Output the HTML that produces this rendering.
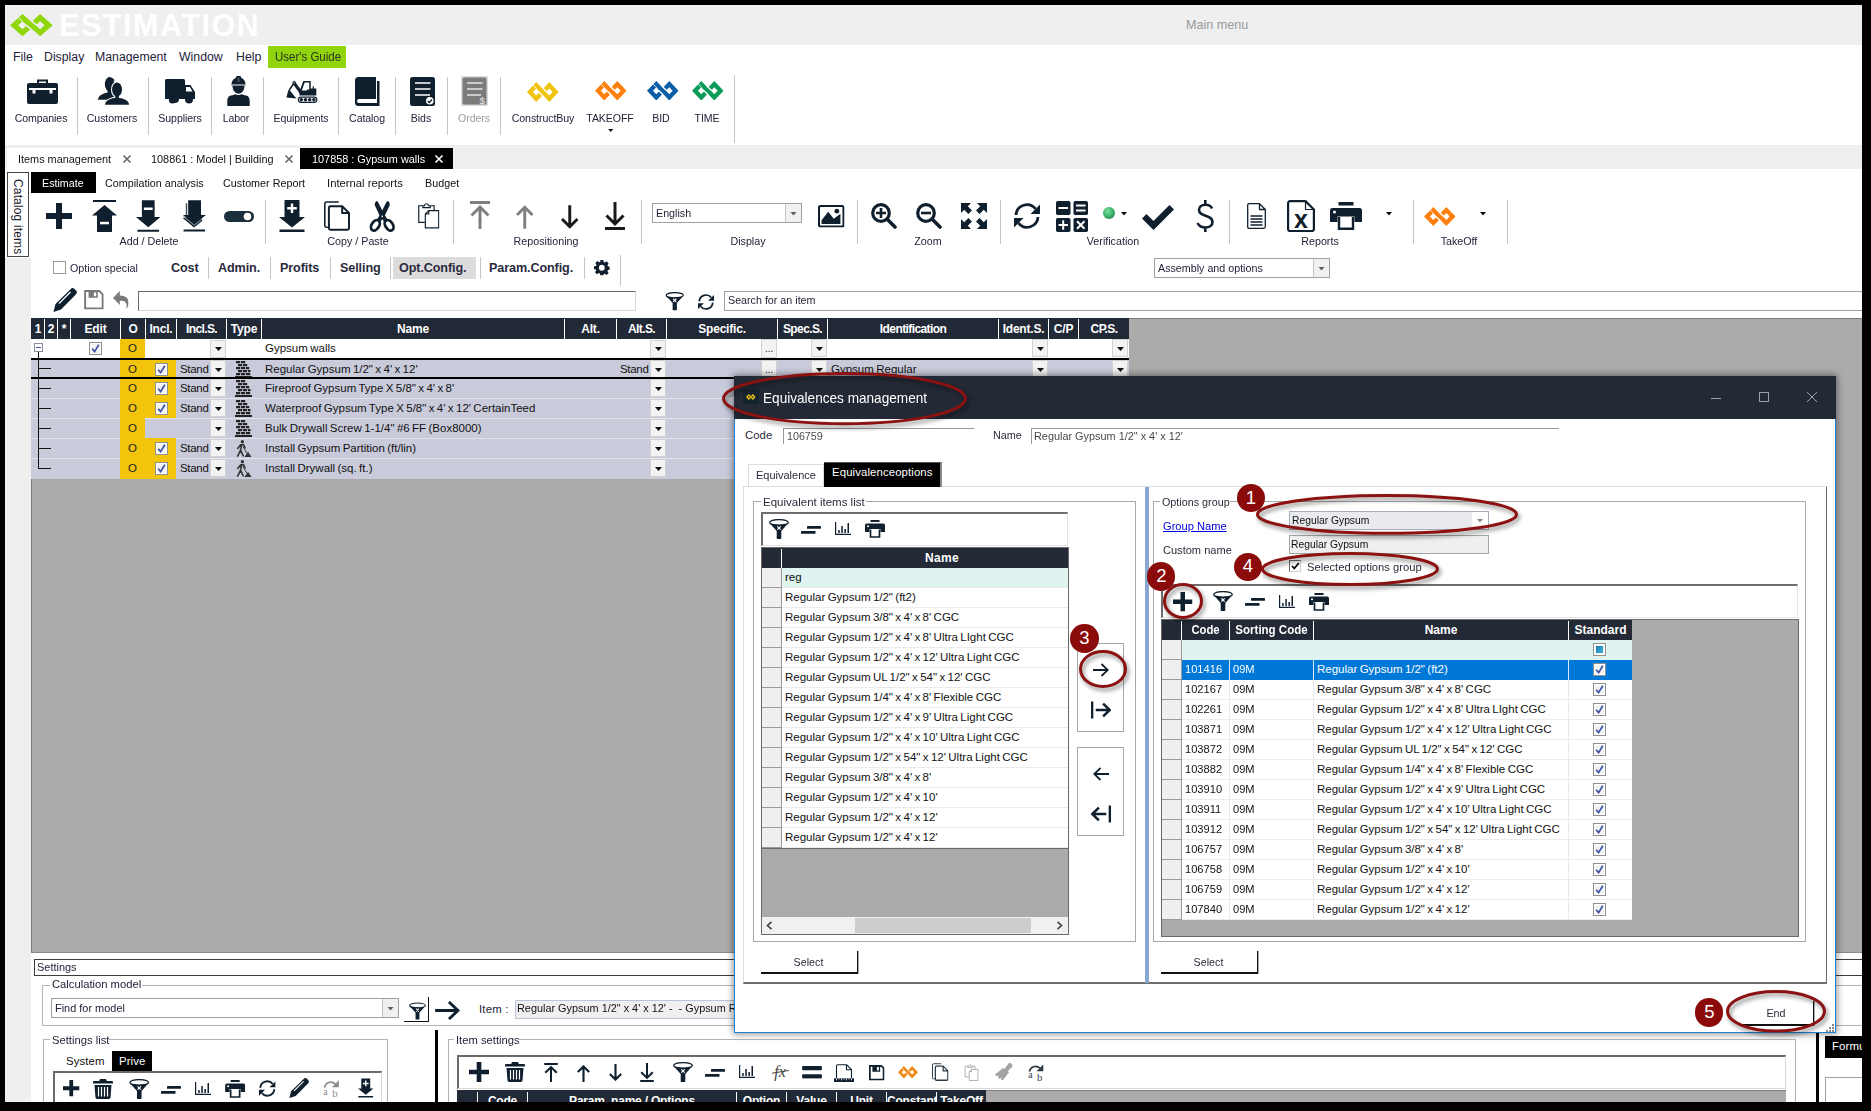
<!DOCTYPE html>
<html><head><meta charset="utf-8"><title>Estimation</title>
<style>
*{box-sizing:border-box;margin:0;padding:0}
html,body{width:1871px;height:1111px;overflow:hidden;background:#000}
body{font-family:"Liberation Sans",sans-serif;font-size:11px;color:#1f2430;position:relative}
.a{position:absolute}
.t{position:absolute;white-space:nowrap;line-height:1}
svg{position:absolute;overflow:visible}
#app{position:absolute;left:5px;top:5px;width:1857px;height:1097px;background:#fff;overflow:hidden}
#w{position:absolute;left:-5px;top:-5px;width:1871px;height:1111px}

</style></head><body>
<svg width="0" height="0" style="position:absolute"><defs>

<symbol id="logo" viewBox="0 0 42.7 22.3" preserveAspectRatio="none">
 <mask id="lgm" maskUnits="userSpaceOnUse" x="0" y="0" width="42.7" height="22.3"><rect width="42.7" height="22.3" fill="#fff"/>
  <path d="M8 3.250L12.900 7.650" stroke="#000" stroke-width="1"/>
  <path d="M21.400 6.950L26.600 11.100M21.300 15.350L16.100 11.200" stroke="#000" stroke-width="1.700"/></mask>
 <g mask="url(#lgm)" fill="currentColor" fill-rule="evenodd">
 <path d="M12.550 0L25.100 11.150L12.550 22.300L0 11.150ZM12.550 7.150L17.050 11.150L12.550 15.150L8.050 11.150Z"/>
 <path d="M30.150 0L42.700 11.150L30.150 22.300L17.600 11.150ZM30.150 7.150L34.650 11.150L30.150 15.150L25.650 11.150Z"/></g>
</symbol>
<symbol id="briefcase" viewBox="0 0 31 25">
 <path fill="currentColor" d="M2 4h27a2 2 0 0 1 2 2v17a2 2 0 0 1-2 2H2a2 2 0 0 1-2-2V6a2 2 0 0 1 2-2z"/>
 <path fill="none" stroke="currentColor" stroke-width="2" d="M11 4V1.5h9V4"/>
 <path fill="#fff" d="M2 9h27v2h-3.5v3.5h-3V11h-14v3.5h-3V11H2z"/>
</symbol>
<symbol id="customers" viewBox="0 0 31.1 28">
 <g fill="currentColor"><ellipse cx="11.6" cy="7.2" rx="4.700" ry="7.200"/><path d="M14 .6l3 2.600l-3.500 1z"/><path d="M0 22.800a11.600 7.300 0 0 1 11.600-7.300h5v7.300z"/><path d="M9.500 12h4.500v5H9.500z"/></g>
 <g fill="currentColor" stroke="#fff" stroke-width="2.200" paint-order="stroke"><ellipse cx="19.100" cy="12.500" rx="5" ry="7.100"/><path d="M7.100 27.900a12 7.100 0 0 1 24 0z"/></g>
 <path fill="currentColor" d="M17.300 18h3.600v4h-3.600z"/>
</symbol>
<symbol id="truck" viewBox="0 0 30 25">
 <path fill="currentColor" d="M1.500 0h17a1.500 1.500 0 0 1 1.500 1.500V6h5.500l4.500 7v7h-2a4 4 0 0 1-8 0h-6a4 4 0 0 1-8 0H0V1.500A1.500 1.500 0 0 1 1.500 0z"/>
 <path fill="#fff" d="M21 8h4l2.500 4.500H21z"/>
 <circle cx="7.500" cy="21" r="3.600" fill="currentColor"/><circle cx="24" cy="21" r="3.600" fill="currentColor"/>
</symbol>
<symbol id="worker" viewBox="0 0 23 30">
 <path fill="currentColor" d="M10 0h3a1 1 0 0 1 1 1v.8c2.800 1 4.300 3.400 4.500 6.200H4.500c.2-2.800 1.700-5.200 4.500-6.200V1a1 1 0 0 1 1-1z"/>
 <path fill="#4a5862" d="M10.600 1.500h1.800v4.500h-1.800z"/>
 <path fill="#848d95" d="M4.300 8h14.400v1.700H4.300z"/>
 <path fill="currentColor" d="M5.500 9.700h12c0 4.300-2.500 8-6 8s-6-3.700-6-8z"/>
 <path fill="currentColor" d="M4 19.500c2-.5 4-1 4.500-1.500c1 1.300 5 1.300 6 0c.5.500 2.500 1 4.500 1.500c3 .8 3.700 3 3.700 6.500v4H.3v-4c0-3.500.7-5.700 3.700-6.500z"/>
</symbol>
<symbol id="excavator" viewBox="0 0 32 22">
 <path fill="currentColor" d="M2.300 9.300L.4 16.400L10.400 17.600L4.300 10z"/>
 <path stroke="currentColor" stroke-width="1.600" d="M3 9.600L8.100 1.800"/>
 <path stroke="currentColor" stroke-width="3.200" d="M8.100 1.800L15.800 12.800"/>
 <circle cx="8.100" cy="1.800" r="1.700" fill="currentColor"/><circle cx="8.100" cy="1.800" r=".6" fill="#fff"/>
 <path fill="currentColor" d="M17.300 0h7.400v7.500h2V5.300h1.200v2.200h2.400v7H13.500V10.200l3.800-10.200z"/>
 <path fill="#fff" d="M18.700 1.500h4.500v7h-1.800l-.8 1h-4.800z"/>
 <rect x="11.800" y="15.600" width="19.600" height="6.300" rx="3.150" fill="currentColor"/>
 <rect x="12.900" y="16.700" width="17.400" height="4.100" rx="2.050" fill="#fff"/>
 <g fill="currentColor"><circle cx="15.300" cy="18.750" r="1.750"/><circle cx="19.500" cy="18.750" r="1.750"/><circle cx="23.700" cy="18.750" r="1.750"/><circle cx="27.900" cy="18.750" r="1.750"/></g>
</symbol>
<symbol id="book" viewBox="0 0 25 29">
 <path fill="currentColor" d="M3.500 0H21v22H4a1.500 1.500 0 0 0 0 4h18V4h2.500v25H3.500A3.500 3.500 0 0 1 0 25.500V3.500A3.500 3.500 0 0 1 3.500 0z"/>
</symbol>
<symbol id="bids" viewBox="0 0 25 29">
 <rect width="25" height="29" rx="2.500" fill="currentColor"/>
 <path stroke="#fff" stroke-width="1.600" d="M5 6h15.500M5 12h15.500M5 18h15"/>
 <circle cx="19.800" cy="23.800" r="3.800" fill="#fff"/>
 <path fill="none" stroke="currentColor" stroke-width="1.300" d="M17.800 24l1.500 1.500l2.700-3"/>
</symbol>
<symbol id="orders" viewBox="0 0 27 30">
 <rect width="27" height="30" fill="#d9d9d9"/>
 <rect x="1.500" y="1.500" width="24" height="27" rx="1.500" fill="#7b7b7b"/>
 <path stroke="#e6e6e6" stroke-width="1.300" d="M6 7h15.500M6 13h15.500M6 19h14"/>
 <text x="21.200" y="27.500" font-size="9.500" fill="#e6e6e6" text-anchor="middle" font-family="Liberation Sans">$</text>
</symbol>
<symbol id="tri" viewBox="0 0 7 4"><path fill="currentColor" d="M0 0h7L3.500 4z"/></symbol>
<symbol id="plus" viewBox="0 0 26 26"><path fill="currentColor" d="M10 0h6v10h10v6H16v10h-6V16H0v-6h10z"/></symbol>
<symbol id="updel" viewBox="0 0 25 32">
 <path fill="currentColor" d="M1 0h23v2H1zM12.500 5L25 15.500h-5V32H5V15.500H0z"/>
 <path fill="#fff" d="M8 21.800h9v2.500H8z"/>
</symbol>
<symbol id="downminus" viewBox="0 0 25 32">
 <path fill="currentColor" d="M6 0h13v17h6L12.500 27.500L0 17h6zM1.500 30h22v2h-22z"/>
 <path fill="#fff" d="M8 7.300h9v2.500H8z"/>
</symbol>
<symbol id="downmulti" viewBox="0 0 25 32">
 <path fill="currentColor" d="M.7 18L12.300 27.800L20.800 20.800L19 16z"/>
 <path fill="none" stroke="#a6aeb4" stroke-width="1" d="M1.200 16.200L12.500 25.400L20.500 19"/>
 <path fill="currentColor" d="M6.300 0h13.100v15.100h5L12.500 24.400L1 15.100h5.300z"/>
 <path fill="#3c4c58" d="M3.900 3.100h1.400v11.800H3.900z"/>
 <path fill="currentColor" d="M1.600 29.900h21.900v2H1.600z"/>
</symbol>
<symbol id="toggle" viewBox="0 0 30 11">
 <rect width="30" height="11" rx="5.500" fill="#1c2f3d"/><circle cx="23.500" cy="5.500" r="3.800" fill="#fff"/>
</symbol>
<symbol id="downplus" viewBox="0 0 26 32">
 <path fill="currentColor" d="M5.500 0h15v17H26L13 27.500L0 17h5.500zM.5 29.500h25V32H.5z"/>
 <path fill="#fff" d="M11.800 3.500h2.400v3.600h3.600v2.400h-3.600v3.600h-2.400V9.500H8.200V7.100h3.600z"/>
</symbol>
<symbol id="copy" viewBox="0 0 27 30">
 <path fill="none" stroke="currentColor" stroke-width="1.600" d="M4 26.500H2.500A1.700 1.700 0 0 1 .8 24.800V2.500A1.700 1.700 0 0 1 2.500 .8H15"/>
 <path fill="none" stroke="currentColor" stroke-width="2" stroke-linejoin="round" d="M6.500 5h12l7 7v15.500a1.500 1.500 0 0 1-1.500 1.500H6.500A1.500 1.500 0 0 1 5 27.500v-21A1.500 1.500 0 0 1 6.500 5zM18.500 5v7h7"/>
</symbol>
<symbol id="scissors" viewBox="0 0 26.5 31">
 <path fill="currentColor" d="M7.300 0Q5.200 2 5.800 4.200L11.300 16L16 21.500L18.500 18.500L15.200 13.300L8.900.8Z"/>
 <path fill="currentColor" d="M19.200 0Q21.300 2 20.700 4.200L15.200 16L10.500 21.500L8 18.500L11.300 13.300L17.600.8Z"/>
 <ellipse cx="6.400" cy="24.300" rx="3.700" ry="5.700" transform="rotate(33 6.400 24.300)" fill="none" stroke="currentColor" stroke-width="2.800"/>
 <ellipse cx="20.100" cy="24.300" rx="3.700" ry="5.700" transform="rotate(-33 20.100 24.300)" fill="none" stroke="currentColor" stroke-width="2.800"/>
 <circle cx="13.250" cy="15.300" r=".9" fill="#dfe3e6"/>
</symbol>
<symbol id="paste" viewBox="0 0 22 27">
 <path fill="none" stroke="currentColor" stroke-width="1.200" d="M7 20.500H.8V3.500H5M12.500 3.500h4V8M5 5.500h7.500V3.500h-1.800a2 2 0 0 0-4 0H5z"/>
 <path fill="none" stroke="currentColor" stroke-width="1.200" d="M11 8.500h10.200v17.700H7.500V12zM7.500 12H11V8.500"/>
</symbol>
<symbol id="arrtop" viewBox="0 0 20 28">
 <path fill="currentColor" d="M0 0h20v3H0z"/>
 <path fill="none" stroke="currentColor" stroke-width="3" d="M10 28V6.500M1.500 14.500L10 6L18.500 14.500"/>
</symbol>
<symbol id="arrup" viewBox="0 0 18 24">
 <path fill="none" stroke="currentColor" stroke-width="3" d="M9 24V2.500M1 10L9 2L17 10"/>
</symbol>
<symbol id="arrdown" viewBox="0 0 18 24">
 <path fill="none" stroke="currentColor" stroke-width="3" d="M9 0v21.500M1 14L9 22L17 14"/>
</symbol>
<symbol id="arrbot" viewBox="0 0 20 28">
 <path fill="currentColor" d="M0 25h20v3H0z"/>
 <path fill="none" stroke="currentColor" stroke-width="3" d="M10 0v21.500M1.500 13.500L10 22L18.500 13.500"/>
</symbol>
<symbol id="image" viewBox="0 0 26 22">
 <rect x="1" y="1" width="24" height="20" rx="1.500" fill="none" stroke="currentColor" stroke-width="2"/>
 <path fill="currentColor" d="M3.500 18.500v-3.500L10 6.500l5.500 7l6.500-5v10z"/><circle cx="18.500" cy="6" r="2.300" fill="currentColor"/>
</symbol>
<symbol id="zoomin" viewBox="0 0 26 26">
 <circle cx="10" cy="10" r="8.300" fill="none" stroke="currentColor" stroke-width="3.200"/>
 <path stroke="currentColor" stroke-width="3.600" stroke-linecap="round" d="M16.500 16.500L24 24"/>
 <path fill="currentColor" d="M8.700 5h2.600v3.700H15v2.600h-3.700V15H8.700v-3.700H5V8.700h3.700z"/>
</symbol>
<symbol id="zoomout" viewBox="0 0 26 26">
 <circle cx="10" cy="10" r="8.300" fill="none" stroke="currentColor" stroke-width="3.200"/>
 <path stroke="currentColor" stroke-width="3.600" stroke-linecap="round" d="M16.500 16.500L24 24"/>
 <path fill="currentColor" d="M5 8.700h10v2.600H5z"/>
</symbol>
<symbol id="expand" viewBox="0 0 26 26">
 <path fill="currentColor" d="M0 0h10L6.800 3.200L11 7.400L7.400 11L3.200 6.800L0 10zM26 0v10l-3.200-3.200L18.600 11L15 7.400l4.200-4.200L16 0zM0 26V16l3.200 3.200L7.400 15l3.600 3.600l-4.200 4.200L10 26zM26 26H16l3.200-3.200L15 18.600l3.600-3.600l4.200 4.200L26 16z"/>
</symbol>
<symbol id="refresh" viewBox="0 0 26 26">
 <path fill="none" stroke="currentColor" stroke-width="2.800" d="M2 12A11 11 0 0 1 21.500 5.800M24 14A11 11 0 0 1 4.500 20.200"/>
 <path fill="currentColor" d="M26 1.500v9.500h-9.500zM0 24.500V15h9.500z"/>
</symbol>
<symbol id="calc" viewBox="0 0 32 31">
 <g fill="currentColor"><rect width="14.500" height="14" rx="1.800"/><rect x="17.500" width="14.500" height="14" rx="1.800"/><rect y="17" width="14.500" height="14" rx="1.800"/><rect x="17.500" y="17" width="14.500" height="14" rx="1.800"/></g>
 <path stroke="#fff" stroke-width="2" fill="none" d="M2.500 7h9.500M20 4.500h9.500M20 9.500h9.500M2.500 24h9.500M7.200 19.200v9.600M21 20.200l7.500 7.600M28.500 20.200l-7.500 7.600"/>
</symbol>
<symbol id="check" viewBox="0 0 32 25"><path fill="currentColor" d="M0 13.500l4.500-4.500l7 7L27.500 0L32 4.500L11.500 25z"/></symbol>
<symbol id="dollar" viewBox="0 0 18 32">
 <path fill="none" stroke="currentColor" stroke-width="2.600" d="M16 8.500C15 6 12.500 4.800 9.500 4.800C5.500 4.800 3 7 3 10c0 7 13.500 4.500 13.500 12c0 3.500-3 5.500-7 5.500c-4 0-6.500-1.500-8-4.500M9.300 0v5M9.300 27v5"/>
</symbol>
<symbol id="doc" viewBox="0 0 19 26">
 <path fill="none" stroke="currentColor" stroke-width="1.300" stroke-linejoin="round" d="M2 .7h10.500l5.800 5.800v17.300a1.500 1.500 0 0 1-1.500 1.500H2A1.300 1.300 0 0 1 .7 24V2A1.300 1.300 0 0 1 2 .7zM12.500.7v5.800h5.800"/>
 <path stroke="currentColor" stroke-width="1.300" d="M3.500 13h12M3.500 16h12M3.500 19h12M3.500 22h12"/>
</symbol>
<symbol id="excel" viewBox="0 0 28 32">
 <path fill="none" stroke="currentColor" stroke-width="2.200" stroke-linejoin="round" d="M3 1.100h15.500l8.400 8.400V29a2 2 0 0 1-2 2H3A1.900 1.900 0 0 1 1.100 29V3A1.900 1.900 0 0 1 3 1.100z"/>
 <path fill="none" stroke="currentColor" stroke-width="1.200" d="M18.500 1.100v8.400h8.400"/>
 <text x="14" y="28" font-size="25" font-weight="bold" fill="currentColor" text-anchor="middle" font-family="Liberation Sans">x</text>
</symbol>
<symbol id="print" viewBox="0 0 32 28">
 <path fill="currentColor" d="M8.500 0h15v3.500h-15zM2.500 6h27A2.500 2.500 0 0 1 32 8.500V20h-7.500v-5.500h-17V20H0V8.500A2.500 2.500 0 0 1 2.500 6z"/>
 <path fill="none" stroke="currentColor" stroke-width="2.400" d="M9 15v11.800h14V15"/>
 <circle cx="4.500" cy="10" r="1.500" fill="#fff"/>
</symbol>


<symbol id="gear" viewBox="0 0 16 16">
 <path fill="currentColor" fill-rule="evenodd" d="M6.500 0h3l.4 2.100l1.200.5l1.800-1.200l2.100 2.100l-1.200 1.800l.5 1.200l2.100.4v3l-2.100.4l-.5 1.200l1.200 1.800l-2.100 2.100l-1.800-1.200l-1.200.5L9.500 16h-3l-.4-2.100l-1.200-.5l-1.800 1.200l-2.100-2.100l1.200-1.800l-.5-1.200L0 9.500v-3l2.100-.4l.5-1.200L1.400 3.100l2.100-2.100l1.800 1.200l1.200-.5zM8 5a3 3 0 1 0 0 6a3 3 0 0 0 0-6z"/>
</symbol>
<symbol id="pencil" viewBox="0 0 24 24">
 <path fill="currentColor" d="M17.500 1.200a3 3 0 0 1 4.300 0l1 1a3 3 0 0 1 0 4.300L8 21.500L.500 24L2.500 16z"/>
 <path stroke="#fff" stroke-width="1.300" d="M6 15.500L17.500 4"/>
</symbol>
<symbol id="save" viewBox="0 0 20 20">
 <path fill="none" stroke="currentColor" stroke-width="2" d="M1 1h14.500L19 4.500V19H1z"/>
 <path fill="currentColor" d="M4.500 1h9.500v7H4.500z"/><path fill="#fff" d="M10 2.500h2.300v4H10z"/>
</symbol>
<symbol id="undo" viewBox="0 0 16 19">
 <path fill="currentColor" d="M7 0v4.500c6 0 9 3 9 7.500c0 3-1 5-2.500 7c.5-2 .8-3.500.3-5.500C13 10.500 10.500 10 7 10v4.500L0 7.200z"/>
</symbol>
<symbol id="filter" viewBox="0 0 20 20">
 <ellipse cx="10" cy="3.400" rx="9.300" ry="2.800" fill="none" stroke="currentColor" stroke-width="1.300"/>
 <path fill="currentColor" d="M.8 4.200C4 6.500 16 6.500 19.200 4.200L12.300 12v7.300a.7.700 0 0 1-.7.700H8.400a.7.700 0 0 1-.7-.7V12z"/>
 <path stroke="#fff" stroke-width="1.200" d="M8.300 7.300l3.400 3.400M11.700 7.300l-3.400 3.400"/>
</symbol>
<symbol id="lines" viewBox="0 0 20 8">
 <rect x="6" y="0" width="14" height="2.800" rx=".6" fill="currentColor"/><rect x="0" y="5" width="14.500" height="2.800" rx=".6" fill="currentColor"/>
</symbol>
<symbol id="chart" viewBox="0 0 16 13">
 <path fill="none" stroke="currentColor" stroke-width="1.200" d="M.6 0v12.400H16"/>
 <path fill="currentColor" d="M3.200 8h1.500v3H3.200zM6.300 4h1.500v7H6.300zM9.400 7h1.500v4H9.400zM12.500 1h1.500v10h-1.500z"/>
</symbol>
<symbol id="printsm" viewBox="0 0 20 18">
 <path fill="currentColor" d="M5.500 0h9v2h-9zM1.800 3.500h16.400A1.800 1.800 0 0 1 20 5.300V12h-4.500V9h-11v3H0V5.300A1.800 1.800 0 0 1 1.800 3.500z"/>
 <path fill="none" stroke="currentColor" stroke-width="1.700" d="M5.500 9.500V17h9V9.500"/>
 <circle cx="3" cy="6.300" r="1" fill="#fff"/>
</symbol>
<symbol id="trash" viewBox="0 0 20 20">
 <path fill="currentColor" d="M7 0h6l.8 2H19a1 1 0 0 1 1 1v1.500H0V3a1 1 0 0 1 1-1h5.200zM1.500 6h17l-1 12.500a1.600 1.600 0 0 1-1.600 1.500H4.100a1.600 1.600 0 0 1-1.600-1.500z"/>
 <path stroke="#fff" stroke-width="1.200" d="M5.500 8v9.500M8.500 8v9.500M11.500 8v9.500M14.500 8v9.500"/>
</symbol>
<symbol id="ab" viewBox="0 0 18 18">
 <path fill="none" stroke="currentColor" stroke-width="1.700" d="M2.500 8.500C3.500 3.500 9 1.500 13.500 5"/>
 <path fill="currentColor" d="M16.800 1.200v7h-7z"/>
 <text x="3.500" y="15.500" font-size="10" fill="currentColor" text-anchor="middle" font-family="Liberation Serif">a</text>
 <text x="13" y="17.800" font-size="11" fill="currentColor" text-anchor="middle" font-family="Liberation Serif">b</text>
</symbol>
<symbol id="fx" viewBox="0 0 17 18">
 <text x="8" y="13.500" font-size="16" font-style="italic" fill="currentColor" text-anchor="middle" font-family="Liberation Serif">fx</text>
 <path stroke="currentColor" stroke-width="1" d="M0 10.200L17 7.500"/>
</symbol>
<symbol id="equal" viewBox="0 0 20 13"><rect width="20" height="4.300" rx=".8" fill="currentColor"/><rect y="8.500" width="20" height="4.300" rx=".8" fill="currentColor"/></symbol>
<symbol id="docruler" viewBox="0 0 20 18">
 <path fill="none" stroke="currentColor" stroke-width="1.100" stroke-linejoin="round" d="M2.500 14V2A1.300 1.300 0 0 1 3.800 .7h8.700l5 5V14M12.500.7v5h5"/>
 <path fill="currentColor" d="M0 14.300h20V18H0z"/><path stroke="#fff" stroke-width=".8" d="M2.500 14.300v2M5 14.300v1.300M7.500 14.300v2M10 14.300v1.300M12.500 14.300v2M15 14.300v1.300M17.500 14.300v2"/>
</symbol>
<symbol id="floppy" viewBox="0 0 16 16">
 <path fill="none" stroke="currentColor" stroke-width="1.800" d="M.9.900h11.800l2.400 2.400v11.800H.9z"/>
 <path fill="currentColor" d="M3.500.9h8v6h-8z"/><path fill="#fff" d="M8.200 2h2v3.700h-2z"/>
</symbol>
<symbol id="copysm" viewBox="0 0 17 18">
 <path fill="none" stroke="currentColor" stroke-width="1" d="M3 16H1.500A1 1 0 0 1 .5 15V1.500A1 1 0 0 1 1.500 .5H9.500"/>
 <path fill="none" stroke="currentColor" stroke-width="1.300" stroke-linejoin="round" d="M4.500 3h7l4.800 4.800v8.700a1 1 0 0 1-1 1H4.500a1 1 0 0 1-1-1V4a1 1 0 0 1 1-1zM11.500 3v4.800h4.800"/>
</symbol>
<symbol id="brush" viewBox="0 0 18 18">
 <path fill="currentColor" d="M13.500.5a1.600 1.600 0 0 1 2.500 0l1.200 1.500a1.500 1.500 0 0 1-.2 2L13 8l1 1.500l-6.500 8l-1.500-1l.5-2l-2 1.200L3 14.500l.8-2.300l-2.300 1L0 11.500L8 5l1.500 1z"/>
</symbol>
<symbol id="ar" viewBox="0 0 16 14"><path fill="none" stroke="currentColor" stroke-width="1.800" d="M0 7h14.500M8.500 1L14.800 7L8.500 13"/></symbol>
<symbol id="arbar" viewBox="0 0 19 16"><path fill="none" stroke="currentColor" stroke-width="2.400" d="M1 0v16M4.500 8h13M11.500 2L17.800 8L11.500 14"/></symbol>
<symbol id="al" viewBox="0 0 16 14"><path fill="none" stroke="currentColor" stroke-width="1.800" d="M16 7H1.500M7.500 1L1.200 7L7.500 13"/></symbol>
<symbol id="albar" viewBox="0 0 19 16"><path fill="none" stroke="currentColor" stroke-width="2.400" d="M18 0v16M14.500 8h-13M7.500 2L1.200 8L7.500 14"/></symbol>
<symbol id="bigarrow" viewBox="0 0 26 20"><path fill="none" stroke="currentColor" stroke-width="3" d="M0 10h23.500M14.500 1L24 10L14.500 19"/></symbol>
<symbol id="brick" viewBox="0 0 17 17">
 <path fill="#222" d="M1 0h4.200v2.300H1zM6 0h4.200v2.300H6zM3 3h4.200v2.300H3zM8 3h4.200v2.300H8zM1 6h4.200v2.300H1zM6 6h4.200v2.300H6zM11 6h3.200v2.300H11zM3 9h4.200v2.300H3zM8 9h4.200v2.300H8zM13 9h2.500v2.300H13zM1 12h4.200v2.300H1zM6 12h4.200v2.300H6zM11 12h4.200v2.300H11zM0 15h17v2H0z"/>
</symbol>
<symbol id="digger" viewBox="0 0 17 18">
 <circle cx="7.300" cy="1.800" r="1.800" fill="#333"/>
 <path fill="none" stroke="#333" stroke-width="1.700" stroke-linejoin="round" d="M2 9.500L5.500 5H8.500L10.500 9M6.500 5.500L5.300 11L2 17.500M5.500 11L8.500 17.500"/>
 <path stroke="#333" stroke-width="1" d="M8 7L12 14"/>
 <path fill="#333" d="M9.500 18L13.300 12.500L17 18z"/>
</symbol>

</defs></svg>
<div id="app"><div id="w">
<!-- part1 -->
<div class="a" style="left:5px;top:5px;width:1857px;height:40px;background:#efefef;"></div>
<svg style="left:9.8px;top:13.9px;color:#8fd60b;" width="42.7" height="22.3"><use href="#logo"/></svg>
<div class="t" style="left:59px;top:10px;font-size:30.5px;color:#fff;font-weight:bold;letter-spacing:1.55px;transform:scaleY(1.0);">ESTIMATION</div>
<div class="t" style="left:1186px;top:19px;font-size:12.6px;color:#9a9a9a;">Main menu</div>
<div class="a" style="left:5px;top:45px;width:1857px;height:25px;background:#fff;"></div>
<div class="t" style="left:13px;top:51px;font-size:12.3px;color:#23233a;">File</div>
<div class="t" style="left:44px;top:51px;font-size:12.3px;color:#23233a;">Display</div>
<div class="t" style="left:95px;top:51px;font-size:12.3px;color:#23233a;">Management</div>
<div class="t" style="left:179px;top:51px;font-size:12.3px;color:#23233a;">Window</div>
<div class="t" style="left:236px;top:51px;font-size:12.3px;color:#23233a;">Help</div>
<div class="a" style="left:268px;top:46px;width:78px;height:22px;background:#8fd40c;"></div>
<div class="t" style="left:274.5px;top:51px;font-size:12.3px;color:#2a3320;transform:scaleX(0.935);transform-origin:left top;">User's Guide</div>
<div class="a" style="left:5px;top:70px;width:1857px;height:75px;background:#fff;"></div>
<div class="a" style="left:77px;top:77px;width:1px;height:58px;background:#c6c6c6;"></div>
<div class="a" style="left:148px;top:77px;width:1px;height:58px;background:#c6c6c6;"></div>
<div class="a" style="left:211px;top:77px;width:1px;height:58px;background:#c6c6c6;"></div>
<div class="a" style="left:263px;top:77px;width:1px;height:58px;background:#c6c6c6;"></div>
<div class="a" style="left:338px;top:77px;width:1px;height:58px;background:#c6c6c6;"></div>
<div class="a" style="left:395px;top:77px;width:1px;height:58px;background:#c6c6c6;"></div>
<div class="a" style="left:447px;top:77px;width:1px;height:58px;background:#c6c6c6;"></div>
<div class="a" style="left:500px;top:77px;width:1px;height:58px;background:#c6c6c6;"></div>
<div class="a" style="left:734px;top:75px;width:1px;height:68px;background:#c6c6c6;"></div>
<svg style="left:27px;top:79px;color:#0f1f2d;" width="31" height="25"><use href="#briefcase"/></svg>
<svg style="left:98px;top:77px;color:#0f1f2d;" width="31" height="28"><use href="#customers"/></svg>
<svg style="left:165px;top:79px;color:#0f1f2d;" width="30" height="25"><use href="#truck"/></svg>
<svg style="left:226.5px;top:76px;color:#0f1f2d;" width="23" height="30"><use href="#worker"/></svg>
<svg style="left:285.5px;top:81px;color:#0f1f2d;" width="32" height="22"><use href="#excavator"/></svg>
<svg style="left:354.5px;top:77px;color:#0f1f2d;" width="25" height="29"><use href="#book"/></svg>
<svg style="left:410px;top:77px;color:#0f1f2d;" width="25" height="29"><use href="#bids"/></svg>
<svg style="left:461px;top:76px;" width="27" height="30"><use href="#orders"/></svg>
<svg style="left:527px;top:82px;color:#f0c30f;" width="31.6" height="20"><use href="#logo"/></svg>
<svg style="left:595px;top:81.3px;color:#ff7f0e;" width="31.6" height="19.4"><use href="#logo"/></svg>
<svg style="left:647px;top:81.3px;color:#0b5ea6;" width="31.6" height="19.4"><use href="#logo"/></svg>
<svg style="left:692px;top:81.3px;color:#0a9b58;" width="31.6" height="19.4"><use href="#logo"/></svg>
<div class="t" style="left:-109px;top:113px;font-size:11.4px;color:#23233a;letter-spacing:-0.1px;width:300px;text-align:center;transform:scaleX(0.93);transform-origin:center top;">Companies</div>
<div class="t" style="left:-38px;top:113px;font-size:11.4px;color:#23233a;letter-spacing:-0.1px;width:300px;text-align:center;transform:scaleX(0.93);transform-origin:center top;">Customers</div>
<div class="t" style="left:30px;top:113px;font-size:11.4px;color:#23233a;letter-spacing:-0.1px;width:300px;text-align:center;transform:scaleX(0.93);transform-origin:center top;">Suppliers</div>
<div class="t" style="left:86px;top:113px;font-size:11.4px;color:#23233a;letter-spacing:-0.1px;width:300px;text-align:center;transform:scaleX(0.93);transform-origin:center top;">Labor</div>
<div class="t" style="left:151px;top:113px;font-size:11.4px;color:#23233a;letter-spacing:-0.1px;width:300px;text-align:center;transform:scaleX(0.93);transform-origin:center top;">Equipments</div>
<div class="t" style="left:217px;top:113px;font-size:11.4px;color:#23233a;letter-spacing:-0.1px;width:300px;text-align:center;transform:scaleX(0.93);transform-origin:center top;">Catalog</div>
<div class="t" style="left:271px;top:113px;font-size:11.4px;color:#23233a;letter-spacing:-0.1px;width:300px;text-align:center;transform:scaleX(0.93);transform-origin:center top;">Bids</div>
<div class="t" style="left:393px;top:113px;font-size:11.4px;color:#23233a;letter-spacing:-0.1px;width:300px;text-align:center;transform:scaleX(0.93);transform-origin:center top;">ConstructBuy</div>
<div class="t" style="left:460px;top:113px;font-size:11.4px;color:#23233a;letter-spacing:-0.1px;width:300px;text-align:center;transform:scaleX(0.93);transform-origin:center top;">TAKEOFF</div>
<div class="t" style="left:511px;top:113px;font-size:11.4px;color:#23233a;letter-spacing:-0.1px;width:300px;text-align:center;transform:scaleX(0.93);transform-origin:center top;">BID</div>
<div class="t" style="left:557px;top:113px;font-size:11.4px;color:#23233a;letter-spacing:-0.1px;width:300px;text-align:center;transform:scaleX(0.93);transform-origin:center top;">TIME</div>
<div class="t" style="left:324px;top:113px;font-size:11.4px;color:#9a9aa4;letter-spacing:-0.1px;width:300px;text-align:center;transform:scaleX(0.93);transform-origin:center top;">Orders</div>
<svg style="left:607.5px;top:128.8px;color:#111;" width="5.5" height="3"><use href="#tri"/></svg>
<div class="a" style="left:5px;top:145px;width:1857px;height:24px;background:#efefef;"></div>
<div class="a" style="left:7px;top:148px;width:293px;height:21px;background:#fff;"></div>
<div class="t" style="left:17.5px;top:154px;font-size:11.4px;color:#111;transform:scaleX(0.955);transform-origin:left top;">Items management</div>
<div class="t" style="left:151px;top:154px;font-size:11.4px;color:#111;transform:scaleX(0.955);transform-origin:left top;">108861 : Model | Building</div>
<div class="a" style="left:300px;top:148px;width:153px;height:21px;background:#000;"></div>
<div class="t" style="left:312px;top:154px;font-size:11.4px;color:#fff;transform:scaleX(0.955);transform-origin:left top;">107858 : Gypsum walls</div>
<svg style="left:123px;top:155px" width="8" height="8"><path d="M0.500 .5L7.500 7.500M7.500 .5L.5 7.500" stroke="#666" stroke-width="1.600"/></svg>
<svg style="left:284.5px;top:155px" width="8" height="8"><path d="M0.500 .5L7.500 7.500M7.500 .5L.5 7.500" stroke="#666" stroke-width="1.600"/></svg>
<svg style="left:435px;top:155px" width="8" height="8"><path d="M0.500 .5L7.500 7.500M7.500 .5L.5 7.500" stroke="#fff" stroke-width="1.600"/></svg>
<div class="a" style="left:5px;top:258px;width:26px;height:844px;background:#efefef;"></div>
<div class="a" style="left:7px;top:172px;width:22px;height:85px;background:#fff;border:1px solid #444;"></div>
<div class="t" style="left:18px;top:0px;font-size:12px;color:#1a1a2a;letter-spacing:0.15px;top:179px;transform-origin:0 0;transform:translate(6px,0) rotate(90deg);">Catalog items</div>
<!-- part2 -->
<div class="a" style="left:31px;top:172px;width:65px;height:21px;background:#000;"></div>
<div class="t" style="left:42px;top:178px;font-size:11.4px;color:#fff;transform:scaleX(0.94);transform-origin:left top;">Estimate</div>
<div class="t" style="left:105px;top:178px;font-size:11.4px;color:#111;transform:scaleX(0.945);transform-origin:left top;">Compilation analysis</div>
<div class="t" style="left:223px;top:178px;font-size:11.4px;color:#111;transform:scaleX(0.945);transform-origin:left top;">Customer Report</div>
<div class="t" style="left:327px;top:178px;font-size:11.4px;color:#111;transform:scaleX(0.99);transform-origin:left top;">Internal reports</div>
<div class="t" style="left:425px;top:178px;font-size:11.4px;color:#111;transform:scaleX(0.945);transform-origin:left top;">Budget</div>
<div class="a" style="left:265px;top:200px;width:1px;height:44px;background:#c6c6c6;"></div>
<div class="a" style="left:453px;top:200px;width:1px;height:44px;background:#c6c6c6;"></div>
<div class="a" style="left:641px;top:200px;width:1px;height:44px;background:#c6c6c6;"></div>
<div class="a" style="left:857px;top:200px;width:1px;height:44px;background:#c6c6c6;"></div>
<div class="a" style="left:1000px;top:200px;width:1px;height:44px;background:#c6c6c6;"></div>
<div class="a" style="left:1229px;top:200px;width:1px;height:44px;background:#c6c6c6;"></div>
<div class="a" style="left:1413px;top:200px;width:1px;height:44px;background:#c6c6c6;"></div>
<div class="a" style="left:1507px;top:200px;width:1px;height:44px;background:#c6c6c6;"></div>
<svg style="left:46px;top:203px;color:#0f1f2d;" width="26" height="26"><use href="#plus"/></svg>
<svg style="left:92px;top:200px;color:#0f1f2d;" width="25" height="32"><use href="#updel"/></svg>
<svg style="left:136px;top:200px;color:#0f1f2d;" width="24.5" height="32"><use href="#downminus"/></svg>
<svg style="left:181.5px;top:200px;color:#0f1f2d;" width="24.5" height="32"><use href="#downmulti"/></svg>
<svg style="left:224px;top:211px;" width="30" height="11"><use href="#toggle"/></svg>
<svg style="left:279px;top:200px;color:#0f1f2d;" width="26" height="32"><use href="#downplus"/></svg>
<svg style="left:323.5px;top:201.3px;color:#0f1f2d;" width="26.5" height="30"><use href="#copy"/></svg>
<svg style="left:368.8px;top:201px;color:#0f1f2d;" width="26.5" height="31"><use href="#scissors"/></svg>
<svg style="left:417.5px;top:202px;color:#0f1f2d;" width="21.5" height="27"><use href="#paste"/></svg>
<svg style="left:470px;top:201px;color:#7f7f7f;" width="20" height="28"><use href="#arrtop"/></svg>
<svg style="left:516px;top:205px;color:#7f7f7f;" width="17.5" height="24"><use href="#arrup"/></svg>
<svg style="left:561px;top:205px;color:#1a1a1a;" width="17.5" height="24"><use href="#arrdown"/></svg>
<svg style="left:605px;top:202.3px;color:#1a1a1a;" width="20" height="28"><use href="#arrbot"/></svg>
<div class="a" style="left:652px;top:203px;width:150px;height:20px;background:#fff;border:1px solid #a0a0a0;"></div><div class="a" style="left:785px;top:204px;width:16px;height:18px;background:#f0f0f0;border-left:1px solid #c4c4c4;"></div><svg style="left:790px;top:211.5px;color:#606060;" width="7" height="3.5"><use href="#tri"/></svg><div class="t" style="left:656px;top:207.5px;font-size:11.4px;color:#23233a;transform:scaleX(0.94);transform-origin:left top;">English</div>
<svg style="left:817.5px;top:204.5px;color:#0f1f2d;" width="26.5" height="22.5"><use href="#image"/></svg>
<svg style="left:871px;top:203px;color:#0f1f2d;" width="26" height="26"><use href="#zoomin"/></svg>
<svg style="left:916px;top:203px;color:#0f1f2d;" width="26" height="26"><use href="#zoomout"/></svg>
<svg style="left:961px;top:203px;color:#0f1f2d;" width="26" height="26"><use href="#expand"/></svg>
<svg style="left:1014px;top:203px;color:#0f1f2d;" width="26" height="26"><use href="#refresh"/></svg>
<svg style="left:1056px;top:201px;color:#0f1f2d;" width="32" height="31"><use href="#calc"/></svg>
<svg style="left:1103px;top:207px" width="12" height="12"><defs><radialGradient id="gd" cx=".4" cy=".35" r=".7"><stop offset="0" stop-color="#7fe0a0"/><stop offset=".6" stop-color="#3cb568"/><stop offset="1" stop-color="#2a8a4c"/></radialGradient></defs><circle cx="6" cy="6" r="6" fill="url(#gd)"/></svg>
<svg style="left:1120.5px;top:212px;color:#111;" width="6" height="3.5"><use href="#tri"/></svg>
<svg style="left:1142px;top:204.5px;color:#0f1f2d;" width="32" height="25"><use href="#check"/></svg>
<svg style="left:1196px;top:200px;color:#0f1f2d;" width="18" height="32"><use href="#dollar"/></svg>
<svg style="left:1247.3px;top:203.3px;color:#0f1f2d;" width="19" height="26"><use href="#doc"/></svg>
<svg style="left:1287px;top:200px;color:#0f1f2d;" width="28" height="32"><use href="#excel"/></svg>
<svg style="left:1330px;top:202px;color:#0f1f2d;" width="32" height="28"><use href="#print"/></svg>
<svg style="left:1385.5px;top:212px;color:#111;" width="6" height="3.5"><use href="#tri"/></svg>
<svg style="left:1424px;top:206.5px;color:#ff7f0e;" width="31.6" height="19"><use href="#logo"/></svg>
<svg style="left:1479.5px;top:212px;color:#111;" width="6" height="3.5"><use href="#tri"/></svg>
<div class="t" style="left:-1.5px;top:235.5px;font-size:11.4px;color:#23233a;width:300px;text-align:center;transform:scaleX(0.94);transform-origin:center top;">Add / Delete</div>
<div class="t" style="left:208px;top:235.5px;font-size:11.4px;color:#23233a;width:300px;text-align:center;transform:scaleX(0.94);transform-origin:center top;">Copy / Paste</div>
<div class="t" style="left:396px;top:235.5px;font-size:11.4px;color:#23233a;width:300px;text-align:center;transform:scaleX(0.94);transform-origin:center top;">Repositioning</div>
<div class="t" style="left:598px;top:235.5px;font-size:11.4px;color:#23233a;width:300px;text-align:center;transform:scaleX(0.94);transform-origin:center top;">Display</div>
<div class="t" style="left:778px;top:235.5px;font-size:11.4px;color:#23233a;width:300px;text-align:center;transform:scaleX(0.94);transform-origin:center top;">Zoom</div>
<div class="t" style="left:963px;top:235.5px;font-size:11.4px;color:#23233a;width:300px;text-align:center;transform:scaleX(0.94);transform-origin:center top;">Verification</div>
<div class="t" style="left:1170px;top:235.5px;font-size:11.4px;color:#23233a;width:300px;text-align:center;transform:scaleX(0.94);transform-origin:center top;">Reports</div>
<div class="t" style="left:1309px;top:235.5px;font-size:11.4px;color:#23233a;width:300px;text-align:center;transform:scaleX(0.94);transform-origin:center top;">TakeOff</div>
<div class="a" style="left:53px;top:261px;width:13px;height:13px;background:#fff;border:1px solid #9a9a9a;"></div>
<div class="t" style="left:70px;top:262.5px;font-size:11.4px;color:#23233a;transform:scaleX(0.94);transform-origin:left top;">Option special</div>
<div class="a" style="left:208px;top:257px;width:1px;height:22px;background:#c6c6c6;"></div>
<div class="a" style="left:270px;top:257px;width:1px;height:22px;background:#c6c6c6;"></div>
<div class="a" style="left:330px;top:257px;width:1px;height:22px;background:#c6c6c6;"></div>
<div class="a" style="left:390px;top:257px;width:1px;height:22px;background:#c6c6c6;"></div>
<div class="a" style="left:480px;top:257px;width:1px;height:22px;background:#c6c6c6;"></div>
<div class="a" style="left:584px;top:257px;width:1px;height:22px;background:#c6c6c6;"></div>
<div class="a" style="left:620px;top:255px;width:1px;height:31px;background:#c6c6c6;"></div>
<div class="a" style="left:393px;top:257px;width:83px;height:22px;background:#dcdcdc;"></div>
<div class="t" style="left:171px;top:261.5px;font-size:12.6px;color:#2a2a3e;font-weight:bold;letter-spacing:-0.1px;">Cost</div>
<div class="t" style="left:218px;top:261.5px;font-size:12.6px;color:#2a2a3e;font-weight:bold;letter-spacing:-0.1px;">Admin.</div>
<div class="t" style="left:280px;top:261.5px;font-size:12.6px;color:#2a2a3e;font-weight:bold;letter-spacing:-0.1px;">Profits</div>
<div class="t" style="left:340px;top:261.5px;font-size:12.6px;color:#2a2a3e;font-weight:bold;letter-spacing:-0.1px;">Selling</div>
<div class="t" style="left:399px;top:261.5px;font-size:12.6px;color:#2a2a3e;font-weight:bold;letter-spacing:-0.1px;">Opt.Config.</div>
<div class="t" style="left:489px;top:261.5px;font-size:12.6px;color:#2a2a3e;font-weight:bold;letter-spacing:-0.1px;">Param.Config.</div>
<svg style="left:594.4px;top:260px;color:#0f1f2d;" width="15.6" height="15.6"><use href="#gear"/></svg>
<div class="a" style="left:1154px;top:258px;width:176px;height:20px;background:#fff;border:1px solid #a0a0a0;"></div><div class="a" style="left:1313px;top:259px;width:16px;height:18px;background:#f0f0f0;border-left:1px solid #c4c4c4;"></div><svg style="left:1318px;top:266.5px;color:#606060;" width="7" height="3.5"><use href="#tri"/></svg><div class="t" style="left:1158px;top:262.5px;font-size:11.4px;color:#23233a;transform:scaleX(0.94);transform-origin:left top;">Assembly and options</div>
<svg style="left:53px;top:288px;color:#0f1f2d;" width="24" height="24"><use href="#pencil"/></svg>
<svg style="left:84px;top:290px;color:#7a7a7a;" width="19.8" height="19.5"><use href="#save"/></svg>
<svg style="left:113px;top:290.5px;color:#7a7a7a;" width="15.6" height="18.5"><use href="#undo"/></svg>
<div class="a" style="left:138px;top:291px;width:498px;height:20px;background:#fff;border:1px solid #d8d8d8;border-top:1px solid #6a6a6a;border-left:1px solid #6a6a6a;"></div>
<svg style="left:664.5px;top:292px;color:#0f1f2d;" width="19.5" height="18.5"><use href="#filter"/></svg>
<svg style="left:698px;top:293.5px;color:#0f1f2d;" width="16" height="16"><use href="#refresh"/></svg>
<div class="a" style="left:724px;top:291px;width:1145px;height:20px;background:#fff;border:1px solid #a0a0a0;"></div>
<div class="t" style="left:728px;top:295px;font-size:11.4px;color:#23233a;transform:scaleX(0.94);transform-origin:left top;">Search for an item</div>
<!-- part3 -->
<div class="a" style="left:31px;top:318px;width:1831px;height:635px;background:#ababab;border-left:1px solid #7c7c7c;border-top:1px solid #7c7c7c;border-bottom:1px solid #8a8a8a;"></div>
<div class="a" style="left:31px;top:318px;width:1098px;height:21px;background:#212836;"></div>
<div class="t" style="left:32px;top:323px;font-size:12px;color:#fff;font-weight:bold;letter-spacing:-0.2px;width:12px;text-align:center;">1</div>
<div class="a" style="left:44px;top:319px;width:1px;height:20px;background:#fff;"></div>
<div class="t" style="left:45px;top:323px;font-size:12px;color:#fff;font-weight:bold;letter-spacing:-0.2px;width:12px;text-align:center;">2</div>
<div class="a" style="left:57px;top:319px;width:1px;height:20px;background:#fff;"></div>
<div class="t" style="left:58px;top:323px;font-size:12px;color:#fff;font-weight:bold;letter-spacing:-0.2px;width:12px;text-align:center;">*</div>
<div class="a" style="left:70px;top:319px;width:1px;height:20px;background:#fff;"></div>
<div class="t" style="left:71px;top:323px;font-size:12px;color:#fff;font-weight:bold;letter-spacing:-0.2px;width:49px;text-align:center;">Edit</div>
<div class="a" style="left:120px;top:319px;width:1px;height:20px;background:#fff;"></div>
<div class="t" style="left:121px;top:323px;font-size:12px;color:#fff;font-weight:bold;letter-spacing:-0.2px;width:24px;text-align:center;">O</div>
<div class="a" style="left:145px;top:319px;width:1px;height:20px;background:#fff;"></div>
<div class="t" style="left:146px;top:323px;font-size:12px;color:#fff;font-weight:bold;letter-spacing:-0.2px;width:30px;text-align:center;">Incl.</div>
<div class="a" style="left:176px;top:319px;width:1px;height:20px;background:#fff;"></div>
<div class="t" style="left:177px;top:323px;font-size:12px;color:#fff;font-weight:bold;letter-spacing:-0.6px;width:49px;text-align:center;">Incl.S.</div>
<div class="a" style="left:226px;top:319px;width:1px;height:20px;background:#fff;"></div>
<div class="t" style="left:227px;top:323px;font-size:12px;color:#fff;font-weight:bold;letter-spacing:-0.2px;width:34px;text-align:center;">Type</div>
<div class="a" style="left:261px;top:319px;width:1px;height:20px;background:#fff;"></div>
<div class="t" style="left:262px;top:323px;font-size:12px;color:#fff;font-weight:bold;letter-spacing:-0.2px;width:302px;text-align:center;">Name</div>
<div class="a" style="left:564px;top:319px;width:1px;height:20px;background:#fff;"></div>
<div class="t" style="left:565px;top:323px;font-size:12px;color:#fff;font-weight:bold;letter-spacing:-0.2px;width:51px;text-align:center;">Alt.</div>
<div class="a" style="left:616px;top:319px;width:1px;height:20px;background:#fff;"></div>
<div class="t" style="left:617px;top:323px;font-size:12px;color:#fff;font-weight:bold;letter-spacing:-0.6px;width:49px;text-align:center;">Alt.S.</div>
<div class="a" style="left:666px;top:319px;width:1px;height:20px;background:#fff;"></div>
<div class="t" style="left:667px;top:323px;font-size:12px;color:#fff;font-weight:bold;letter-spacing:-0.2px;width:110px;text-align:center;">Specific.</div>
<div class="a" style="left:777px;top:319px;width:1px;height:20px;background:#fff;"></div>
<div class="t" style="left:778px;top:323px;font-size:12px;color:#fff;font-weight:bold;letter-spacing:-0.6px;width:49px;text-align:center;">Spec.S.</div>
<div class="a" style="left:827px;top:319px;width:1px;height:20px;background:#fff;"></div>
<div class="t" style="left:828px;top:323px;font-size:12px;color:#fff;font-weight:bold;letter-spacing:-0.6px;width:170px;text-align:center;">Identification</div>
<div class="a" style="left:998px;top:319px;width:1px;height:20px;background:#fff;"></div>
<div class="t" style="left:999px;top:323px;font-size:12px;color:#fff;font-weight:bold;letter-spacing:-0.2px;width:49px;text-align:center;">Ident.S.</div>
<div class="a" style="left:1048px;top:319px;width:1px;height:20px;background:#fff;"></div>
<div class="t" style="left:1049px;top:323px;font-size:12px;color:#fff;font-weight:bold;letter-spacing:-0.2px;width:29px;text-align:center;">C/P</div>
<div class="a" style="left:1078px;top:319px;width:1px;height:20px;background:#fff;"></div>
<div class="t" style="left:1079px;top:323px;font-size:12px;color:#fff;font-weight:bold;letter-spacing:-0.6px;width:50px;text-align:center;">CP.S.</div>
<div class="a" style="left:31px;top:339px;width:1098px;height:20px;background:#fff;"></div>
<div class="a" style="left:120px;top:339px;width:25px;height:20px;background:#f2c40c;"></div>
<div class="t" style="left:120px;top:342.5px;font-size:11.5px;color:#222;width:25px;text-align:center;">O</div>
<div class="a" style="left:210px;top:339.5px;width:16px;height:18px;background:#f3f3f3;border:1px solid #d2d2d2;"></div><svg style="left:214.5px;top:347.0px;color:#111;" width="7" height="4"><use href="#tri"/></svg>
<div class="t" style="left:265px;top:342.5px;font-size:11.5px;color:#111;word-spacing:-0.8px;">Gypsum walls</div>
<div class="a" style="left:650px;top:339.5px;width:16px;height:18px;background:#f3f3f3;border:1px solid #d2d2d2;"></div><svg style="left:654.5px;top:347.0px;color:#111;" width="7" height="4"><use href="#tri"/></svg>
<div class="a" style="left:761px;top:339px;width:16px;height:19px;background:#f3f3f3;border:1px solid #d2d2d2;"></div>
<div class="t" style="left:765px;top:344px;font-size:10px;color:#111;">...</div>
<div class="a" style="left:811px;top:339px;width:16px;height:18px;background:#f3f3f3;border:1px solid #d2d2d2;"></div><svg style="left:815.5px;top:346.5px;color:#111;" width="7" height="4"><use href="#tri"/></svg>
<div class="a" style="left:1032px;top:339px;width:16px;height:18px;background:#f3f3f3;border:1px solid #d2d2d2;"></div><svg style="left:1036.5px;top:346.5px;color:#111;" width="7" height="4"><use href="#tri"/></svg>
<div class="a" style="left:1112px;top:339px;width:16px;height:18px;background:#f3f3f3;border:1px solid #d2d2d2;"></div><svg style="left:1116.5px;top:346.5px;color:#111;" width="7" height="4"><use href="#tri"/></svg>
<div class="a" style="left:31px;top:358px;width:1098px;height:20px;background:#c9cbdb;"></div>
<div class="a" style="left:120px;top:358px;width:56px;height:20px;background:#f2c40c;"></div>
<div class="t" style="left:120px;top:364px;font-size:11.5px;color:#222;width:25px;text-align:center;">O</div>
<div class="a" style="left:154.5px;top:362.5px;width:13px;height:13px;background:#f3f3f3;border:1px solid #8e8f8f;box-shadow:inset 0 0 0 1px #fff;"></div><svg style="left:156.5px;top:364.5px" width="9" height="9"><path d="M1.200 4.800L3.600 7.600L7.800 .8" fill="none" stroke="#3b50a6" stroke-width="1.700"/></svg>
<div class="t" style="left:180px;top:364px;font-size:11.5px;color:#111;letter-spacing:-0.3px;">Stand</div>
<div class="a" style="left:210px;top:360px;width:16px;height:18px;background:#f3f3f3;border:1px solid #d2d2d2;"></div><svg style="left:214.5px;top:367.5px;color:#111;" width="7" height="4"><use href="#tri"/></svg>
<svg style="left:234.5px;top:361px;" width="17" height="17"><use href="#brick"/></svg>
<div class="t" style="left:265px;top:364px;font-size:11.5px;color:#111;word-spacing:-0.8px;">Regular Gypsum 1/2" x 4' x 12'</div>
<div class="a" style="left:650px;top:360px;width:16px;height:18px;background:#f3f3f3;border:1px solid #d2d2d2;"></div><svg style="left:654.5px;top:367.5px;color:#111;" width="7" height="4"><use href="#tri"/></svg>
<div class="a" style="left:761px;top:360px;width:16px;height:19px;background:#f3f3f3;border:1px solid #d2d2d2;"></div>
<div class="t" style="left:765px;top:365px;font-size:10px;color:#111;">...</div>
<div class="a" style="left:811px;top:360px;width:16px;height:18px;background:#f3f3f3;border:1px solid #d2d2d2;"></div><svg style="left:815.5px;top:367.5px;color:#111;" width="7" height="4"><use href="#tri"/></svg>
<div class="a" style="left:1032px;top:360px;width:16px;height:18px;background:#f3f3f3;border:1px solid #d2d2d2;"></div><svg style="left:1036.5px;top:367.5px;color:#111;" width="7" height="4"><use href="#tri"/></svg>
<div class="a" style="left:1112px;top:360px;width:16px;height:18px;background:#f3f3f3;border:1px solid #d2d2d2;"></div><svg style="left:1116.5px;top:367.5px;color:#111;" width="7" height="4"><use href="#tri"/></svg>
<div class="a" style="left:31px;top:378px;width:1098px;height:20px;background:#c9cbdb;border-top:1px solid #e1e2ea;"></div>
<div class="a" style="left:120px;top:378px;width:56px;height:20px;background:#f2c40c;"></div>
<div class="t" style="left:120px;top:383px;font-size:11.5px;color:#222;width:25px;text-align:center;">O</div>
<div class="a" style="left:154.5px;top:381.5px;width:13px;height:13px;background:#f3f3f3;border:1px solid #8e8f8f;box-shadow:inset 0 0 0 1px #fff;"></div><svg style="left:156.5px;top:383.5px" width="9" height="9"><path d="M1.200 4.800L3.600 7.600L7.800 .8" fill="none" stroke="#3b50a6" stroke-width="1.700"/></svg>
<div class="t" style="left:180px;top:383px;font-size:11.5px;color:#111;letter-spacing:-0.3px;">Stand</div>
<div class="a" style="left:210px;top:379px;width:16px;height:18px;background:#f3f3f3;border:1px solid #d2d2d2;"></div><svg style="left:214.5px;top:386.5px;color:#111;" width="7" height="4"><use href="#tri"/></svg>
<svg style="left:234.5px;top:379.5px;" width="17" height="17"><use href="#brick"/></svg>
<div class="t" style="left:265px;top:383px;font-size:11.5px;color:#111;word-spacing:-0.8px;">Fireproof Gypsum Type X 5/8" x 4' x 8'</div>
<div class="a" style="left:650px;top:379px;width:16px;height:18px;background:#f3f3f3;border:1px solid #d2d2d2;"></div><svg style="left:654.5px;top:386.5px;color:#111;" width="7" height="4"><use href="#tri"/></svg>
<div class="a" style="left:31px;top:398px;width:1098px;height:20px;background:#c9cbdb;border-top:1px solid #e1e2ea;"></div>
<div class="a" style="left:120px;top:398px;width:56px;height:20px;background:#f2c40c;"></div>
<div class="t" style="left:120px;top:403px;font-size:11.5px;color:#222;width:25px;text-align:center;">O</div>
<div class="a" style="left:154.5px;top:401.5px;width:13px;height:13px;background:#f3f3f3;border:1px solid #8e8f8f;box-shadow:inset 0 0 0 1px #fff;"></div><svg style="left:156.5px;top:403.5px" width="9" height="9"><path d="M1.200 4.800L3.600 7.600L7.800 .8" fill="none" stroke="#3b50a6" stroke-width="1.700"/></svg>
<div class="t" style="left:180px;top:403px;font-size:11.5px;color:#111;letter-spacing:-0.3px;">Stand</div>
<div class="a" style="left:210px;top:399px;width:16px;height:18px;background:#f3f3f3;border:1px solid #d2d2d2;"></div><svg style="left:214.5px;top:406.5px;color:#111;" width="7" height="4"><use href="#tri"/></svg>
<svg style="left:234.5px;top:399.5px;" width="17" height="17"><use href="#brick"/></svg>
<div class="t" style="left:265px;top:403px;font-size:11.5px;color:#111;word-spacing:-0.8px;">Waterproof Gypsum Type X 5/8" x 4' x 12' CertainTeed</div>
<div class="a" style="left:650px;top:399px;width:16px;height:18px;background:#f3f3f3;border:1px solid #d2d2d2;"></div><svg style="left:654.5px;top:406.5px;color:#111;" width="7" height="4"><use href="#tri"/></svg>
<div class="a" style="left:31px;top:418px;width:1098px;height:20px;background:#c9cbdb;border-top:1px solid #e1e2ea;"></div>
<div class="a" style="left:120px;top:418px;width:25px;height:20px;background:#f2c40c;"></div>
<div class="t" style="left:120px;top:423px;font-size:11.5px;color:#222;width:25px;text-align:center;">O</div>
<div class="a" style="left:210px;top:419px;width:16px;height:18px;background:#f3f3f3;border:1px solid #d2d2d2;"></div><svg style="left:214.5px;top:426.5px;color:#111;" width="7" height="4"><use href="#tri"/></svg>
<svg style="left:234.5px;top:419.5px;" width="17" height="17"><use href="#brick"/></svg>
<div class="t" style="left:265px;top:423px;font-size:11.5px;color:#111;word-spacing:-0.8px;">Bulk Drywall Screw 1-1/4" #6 FF (Box8000)</div>
<div class="a" style="left:650px;top:419px;width:16px;height:18px;background:#f3f3f3;border:1px solid #d2d2d2;"></div><svg style="left:654.5px;top:426.5px;color:#111;" width="7" height="4"><use href="#tri"/></svg>
<div class="a" style="left:31px;top:438px;width:1098px;height:20px;background:#c9cbdb;border-top:1px solid #e1e2ea;"></div>
<div class="a" style="left:120px;top:438px;width:56px;height:20px;background:#f2c40c;"></div>
<div class="t" style="left:120px;top:443px;font-size:11.5px;color:#222;width:25px;text-align:center;">O</div>
<div class="a" style="left:154.5px;top:441.5px;width:13px;height:13px;background:#f3f3f3;border:1px solid #8e8f8f;box-shadow:inset 0 0 0 1px #fff;"></div><svg style="left:156.5px;top:443.5px" width="9" height="9"><path d="M1.200 4.800L3.600 7.600L7.800 .8" fill="none" stroke="#3b50a6" stroke-width="1.700"/></svg>
<div class="t" style="left:180px;top:443px;font-size:11.5px;color:#111;letter-spacing:-0.3px;">Stand</div>
<div class="a" style="left:210px;top:439px;width:16px;height:18px;background:#f3f3f3;border:1px solid #d2d2d2;"></div><svg style="left:214.5px;top:446.5px;color:#111;" width="7" height="4"><use href="#tri"/></svg>
<svg style="left:234.5px;top:439.5px;" width="17" height="17"><use href="#digger"/></svg>
<div class="t" style="left:265px;top:443px;font-size:11.5px;color:#111;word-spacing:-0.8px;">Install Gypsum Partition (ft/lin)</div>
<div class="a" style="left:650px;top:439px;width:16px;height:18px;background:#f3f3f3;border:1px solid #d2d2d2;"></div><svg style="left:654.5px;top:446.5px;color:#111;" width="7" height="4"><use href="#tri"/></svg>
<div class="a" style="left:31px;top:458px;width:1098px;height:21px;background:#c9cbdb;border-top:1px solid #e1e2ea;"></div>
<div class="a" style="left:120px;top:458px;width:56px;height:21px;background:#f2c40c;"></div>
<div class="t" style="left:120px;top:463px;font-size:11.5px;color:#222;width:25px;text-align:center;">O</div>
<div class="a" style="left:154.5px;top:461.5px;width:13px;height:13px;background:#f3f3f3;border:1px solid #8e8f8f;box-shadow:inset 0 0 0 1px #fff;"></div><svg style="left:156.5px;top:463.5px" width="9" height="9"><path d="M1.200 4.800L3.600 7.600L7.800 .8" fill="none" stroke="#3b50a6" stroke-width="1.700"/></svg>
<div class="t" style="left:180px;top:463px;font-size:11.5px;color:#111;letter-spacing:-0.3px;">Stand</div>
<div class="a" style="left:210px;top:459px;width:16px;height:18px;background:#f3f3f3;border:1px solid #d2d2d2;"></div><svg style="left:214.5px;top:466.5px;color:#111;" width="7" height="4"><use href="#tri"/></svg>
<svg style="left:234.5px;top:459.5px;" width="17" height="17"><use href="#digger"/></svg>
<div class="t" style="left:265px;top:463px;font-size:11.5px;color:#111;word-spacing:-0.8px;">Install Drywall (sq. ft.)</div>
<div class="a" style="left:650px;top:459px;width:16px;height:18px;background:#f3f3f3;border:1px solid #d2d2d2;"></div><svg style="left:654.5px;top:466.5px;color:#111;" width="7" height="4"><use href="#tri"/></svg>
<div class="a" style="left:89.0px;top:342.0px;width:13px;height:13px;background:#f3f3f3;border:1px solid #8e8f8f;box-shadow:inset 0 0 0 1px #fff;"></div><svg style="left:91.0px;top:344.0px" width="9" height="9"><path d="M1.200 4.800L3.600 7.600L7.800 .8" fill="none" stroke="#3b50a6" stroke-width="1.700"/></svg>
<div class="t" style="left:620px;top:364px;font-size:11.5px;color:#111;letter-spacing:-0.3px;">Stand</div>
<div class="t" style="left:831px;top:364px;font-size:11.5px;color:#111;word-spacing:-0.8px;">Gypsum Regular</div>
<div class="a" style="left:31px;top:358px;width:1098px;height:2px;background:#000;"></div>
<div class="a" style="left:31px;top:377px;width:1098px;height:2px;background:#000;"></div>
<div class="a" style="left:34px;top:343px;width:9px;height:9px;background:#fff;border:1px solid #8a8a9a;"></div>
<div class="a" style="left:36px;top:347px;width:5px;height:1px;background:#3a4fa8;"></div>
<div class="a" style="left:38px;top:352px;width:1px;height:117px;background:#111;"></div>
<div class="a" style="left:38px;top:368px;width:13px;height:1px;background:#111;"></div>
<div class="a" style="left:38px;top:388px;width:13px;height:1px;background:#111;"></div>
<div class="a" style="left:38px;top:408px;width:13px;height:1px;background:#111;"></div>
<div class="a" style="left:38px;top:428px;width:13px;height:1px;background:#111;"></div>
<div class="a" style="left:38px;top:448px;width:13px;height:1px;background:#111;"></div>
<div class="a" style="left:38px;top:468px;width:13px;height:1px;background:#111;"></div>
<!-- part4 -->
<div class="a" style="left:31px;top:953px;width:1831px;height:149px;background:#fff;"></div>
<div class="a" style="left:34px;top:959px;width:1840px;height:17px;background:#fff;border:1px solid #3c3c3c;"></div>
<div class="t" style="left:36.5px;top:962px;font-size:11.4px;color:#23233a;transform:scaleX(0.96);transform-origin:left top;">Settings</div>
<div class="a" style="left:42px;top:985px;width:1830px;height:41px;border:1px solid #b4b4b4;"></div><div class="a" style="left:50px;top:979px;width:92px;height:12px;background:#fff;"></div><div class="t" style="left:52px;top:979.3px;font-size:11.4px;color:#23233a;transform:scaleX(0.985);transform-origin:left top;">Calculation model</div>
<div class="a" style="left:51px;top:998px;width:348px;height:20px;background:#fff;border:1px solid #a0a0a0;"></div>
<div class="a" style="left:382px;top:999px;width:16px;height:18px;background:#f0f0f0;border-left:1px solid #c4c4c4;"></div>
<svg style="left:386.5px;top:1006.5px;color:#606060;" width="7" height="3.5"><use href="#tri"/></svg>
<div class="t" style="left:55px;top:1002.5px;font-size:11.4px;color:#23233a;transform:scaleX(0.96);transform-origin:left top;">Find for model</div>
<div class="a" style="left:404px;top:997px;width:25px;height:25px;background:#fff;border-right:1px solid #111;border-bottom:1px solid #111;"></div>
<svg style="left:408.5px;top:1002px;color:#0f1f2d;" width="17" height="18"><use href="#filter"/></svg>
<svg style="left:435px;top:1001px;color:#0f1f2d;" width="25" height="19"><use href="#bigarrow"/></svg>
<div class="t" style="left:479px;top:1004px;font-size:11.4px;color:#23233a;letter-spacing:0.2px;">Item :</div>
<div class="a" style="left:515px;top:1000px;width:400px;height:19px;background:#f0f0f0;border:1px solid #b9c4d4;"></div>
<div class="t" style="left:517px;top:1003px;font-size:11.4px;color:#111;transform:scaleX(0.955);transform-origin:left top;">Regular Gypsum 1/2" x 4' x 12' -&nbsp; - Gypsum Regular</div>
<div class="a" style="left:43px;top:1039px;width:345px;height:80px;border:1px solid #b4b4b4;"></div><div class="a" style="left:50px;top:1033px;width:59px;height:12px;background:#fff;"></div><div class="t" style="left:52px;top:1034.5px;font-size:11.4px;color:#23233a;transform:scaleX(0.985);transform-origin:left top;">Settings list</div>
<div class="t" style="left:66px;top:1055.5px;font-size:11.4px;color:#111;letter-spacing:0.1px;">System</div>
<div class="a" style="left:112px;top:1051px;width:40px;height:20px;background:#000;"></div>
<div class="t" style="left:119px;top:1055.5px;font-size:11.4px;color:#fff;letter-spacing:0.1px;">Prive</div>
<div class="a" style="left:53px;top:1071px;width:329px;height:40px;background:#fff;border:1px solid #d8d8d8;border-top:2px solid #6a6a6a;border-left:2px solid #6a6a6a;"></div>
<svg style="left:63px;top:1080px;color:#0f1f2d;" width="16.5" height="16.5"><use href="#plus"/></svg>
<svg style="left:93px;top:1079px;color:#0f1f2d;" width="20" height="20"><use href="#trash"/></svg>
<svg style="left:128.5px;top:1079px;color:#0f1f2d;" width="20.5" height="20"><use href="#filter"/></svg>
<svg style="left:161px;top:1086px;color:#0f1f2d;" width="20" height="8"><use href="#lines"/></svg>
<svg style="left:195px;top:1081.5px;color:#0f1f2d;" width="16" height="13"><use href="#chart"/></svg>
<svg style="left:224.7px;top:1080px;color:#0f1f2d;" width="20.3" height="18"><use href="#printsm"/></svg>
<svg style="left:259px;top:1080px;color:#0f1f2d;" width="16.6" height="17"><use href="#refresh"/></svg>
<svg style="left:289px;top:1078px;color:#0f1f2d;" width="20" height="20"><use href="#pencil"/></svg>
<svg style="left:322px;top:1079px;color:#8c8c8c;" width="18" height="18"><use href="#ab"/></svg>
<svg style="left:357.5px;top:1078px;color:#0f1f2d;" width="15.5" height="20"><use href="#downplus"/></svg>
<div class="a" style="left:435px;top:1030px;width:3px;height:80px;background:#000;"></div>
<div class="a" style="left:448px;top:1039px;width:1348px;height:80px;border:1px solid #b4b4b4;"></div><div class="a" style="left:454px;top:1033px;width:65px;height:12px;background:#fff;"></div><div class="t" style="left:456px;top:1034.5px;font-size:11.4px;color:#23233a;transform:scaleX(0.985);transform-origin:left top;">Item settings</div>
<div class="a" style="left:457px;top:1055px;width:1329px;height:34px;background:#fff;border:1px solid #d8d8d8;border-top:2px solid #6a6a6a;border-left:2px solid #6a6a6a;"></div>
<svg style="left:469px;top:1062px;color:#0f1f2d;" width="20" height="20"><use href="#plus"/></svg>
<svg style="left:505px;top:1062px;color:#0f1f2d;" width="20" height="20"><use href="#trash"/></svg>
<svg style="left:544px;top:1062.5px;color:#0f1f2d;" width="14" height="19"><use href="#arrtop"/></svg>
<svg style="left:576.5px;top:1064.5px;color:#0f1f2d;" width="13" height="17"><use href="#arrup"/></svg>
<svg style="left:608.5px;top:1063.5px;color:#0f1f2d;" width="13" height="17"><use href="#arrdown"/></svg>
<svg style="left:639.5px;top:1062.5px;color:#0f1f2d;" width="14" height="19"><use href="#arrbot"/></svg>
<svg style="left:672.5px;top:1062px;color:#0f1f2d;" width="20" height="20"><use href="#filter"/></svg>
<svg style="left:704.5px;top:1068.5px;color:#0f1f2d;" width="20" height="8"><use href="#lines"/></svg>
<svg style="left:739px;top:1064.5px;color:#0f1f2d;" width="16" height="13"><use href="#chart"/></svg>
<svg style="left:772px;top:1063px;color:#444;" width="17" height="18"><use href="#fx"/></svg>
<svg style="left:802px;top:1065.8px;color:#0f1f2d;" width="20" height="12.8"><use href="#equal"/></svg>
<svg style="left:834px;top:1063.5px;color:#0f1f2d;" width="20" height="18"><use href="#docruler"/></svg>
<svg style="left:868.5px;top:1064.5px;color:#0f1f2d;" width="15.5" height="15.5"><use href="#floppy"/></svg>
<svg style="left:898px;top:1066px;color:#f08a1c;" width="20" height="12.5"><use href="#logo"/></svg>
<svg style="left:931.8px;top:1063px;color:#2c3a46;" width="16.5" height="18"><use href="#copysm"/></svg>
<svg style="left:964px;top:1063.5px;color:#9a9a9a;" width="15" height="17"><use href="#paste"/></svg>
<svg style="left:994.7px;top:1062.5px;color:#a3a3a3;" width="18" height="18"><use href="#brush"/></svg>
<svg style="left:1027px;top:1063px;color:#2c3a46;" width="17.5" height="18"><use href="#ab"/></svg>
<div class="a" style="left:457px;top:1090px;width:1329px;height:14px;background:#ababab;border-top:1px solid #7c7c7c;"></div>
<div class="a" style="left:457px;top:1090px;width:529px;height:14px;background:#212836;"></div>
<div class="a" style="left:477px;top:1092px;width:1px;height:12px;background:#fff;"></div>
<div class="a" style="left:478px;top:1090px;width:49px;height:14px;overflow:hidden;"><div class="t" style="left:0px;top:5px;font-size:12px;color:#fff;font-weight:bold;letter-spacing:-0.2px;width:49px;text-align:center;">Code</div></div>
<div class="a" style="left:527px;top:1092px;width:1px;height:12px;background:#fff;"></div>
<div class="a" style="left:528px;top:1090px;width:208px;height:14px;overflow:hidden;"><div class="t" style="left:0px;top:5px;font-size:12px;color:#fff;font-weight:bold;letter-spacing:-0.2px;width:208px;text-align:center;">Param. name / Options</div></div>
<div class="a" style="left:736px;top:1092px;width:1px;height:12px;background:#fff;"></div>
<div class="a" style="left:737px;top:1090px;width:49px;height:14px;overflow:hidden;"><div class="t" style="left:0px;top:5px;font-size:12px;color:#fff;font-weight:bold;letter-spacing:-0.2px;width:49px;text-align:center;">Option</div></div>
<div class="a" style="left:786px;top:1092px;width:1px;height:12px;background:#fff;"></div>
<div class="a" style="left:787px;top:1090px;width:49px;height:14px;overflow:hidden;"><div class="t" style="left:0px;top:5px;font-size:12px;color:#fff;font-weight:bold;letter-spacing:-0.2px;width:49px;text-align:center;">Value</div></div>
<div class="a" style="left:836px;top:1092px;width:1px;height:12px;background:#fff;"></div>
<div class="a" style="left:837px;top:1090px;width:49px;height:14px;overflow:hidden;"><div class="t" style="left:0px;top:5px;font-size:12px;color:#fff;font-weight:bold;letter-spacing:-0.2px;width:49px;text-align:center;">Unit</div></div>
<div class="a" style="left:886px;top:1092px;width:1px;height:12px;background:#fff;"></div>
<div class="a" style="left:887px;top:1090px;width:49px;height:14px;overflow:hidden;"><div class="t" style="left:0px;top:5px;font-size:12px;color:#fff;font-weight:bold;letter-spacing:-0.2px;width:49px;text-align:center;">Constant</div></div>
<div class="a" style="left:936px;top:1092px;width:1px;height:12px;background:#fff;"></div>
<div class="a" style="left:937px;top:1090px;width:49px;height:14px;overflow:hidden;"><div class="t" style="left:0px;top:5px;font-size:12px;color:#fff;font-weight:bold;letter-spacing:-0.2px;width:49px;text-align:center;">TakeOff</div></div>
<div class="a" style="left:1816px;top:1033px;width:3px;height:75px;background:#000;"></div>
<div class="a" style="left:1825px;top:1036px;width:40px;height:21.5px;background:#000;"></div>
<div class="t" style="left:1832px;top:1041px;font-size:11.4px;color:#fff;letter-spacing:0.1px;">Formula</div>
<div class="a" style="left:1825px;top:1077px;width:50px;height:30px;background:#fff;border:1px solid #a0a0a0;"></div>
<!-- part5 -->
<div class="a" style="left:734px;top:376px;width:1102px;height:657px;background:#fff;border:1px solid #1883d7;box-shadow:0 0 7px 1px rgba(0,0,0,.45);"></div>
<div class="a" style="left:734px;top:376px;width:1102px;height:43px;background:#232a36;"></div>
<div class="a" style="left:743px;top:389px;width:16px;height:15px;background:#15232f;"></div>
<svg style="left:746.3px;top:394.3px;color:#f0c30f;" width="9.8" height="6"><use href="#logo"/></svg>
<div class="t" style="left:763px;top:391px;font-size:14.4px;color:#fff;transform:scaleX(0.945);transform-origin:left top;">Equivalences management</div>
<div class="a" style="left:1711px;top:398px;width:10px;height:1px;background:#9aa0a8;"></div>
<div class="a" style="left:1759px;top:392px;width:10px;height:10px;border:1px solid #9aa0a8;"></div>
<svg style="left:1807px;top:392px" width="10" height="10"><path d="M0 0L10 10M10 0L0 10" stroke="#9aa0a8" stroke-width="1"/></svg>
<div class="t" style="left:745px;top:429.5px;font-size:11.4px;color:#2b2b3b;letter-spacing:0.0px;">Code</div>
<div class="a" style="left:783px;top:428px;width:191px;height:16px;background:#fff;border-top:1px solid #9a9a9a;border-left:1px solid #9a9a9a;"></div>
<div class="t" style="left:787px;top:431px;font-size:11.4px;color:#4a4a4a;transform:scaleX(0.94);transform-origin:left top;">106759</div>
<div class="t" style="left:993px;top:429.5px;font-size:11.4px;color:#2b2b3b;transform:scaleX(0.95);transform-origin:left top;">Name</div>
<div class="a" style="left:1031px;top:428px;width:528px;height:16px;background:#fff;border-top:1px solid #9a9a9a;border-left:1px solid #9a9a9a;"></div>
<div class="t" style="left:1034px;top:431px;font-size:11.4px;color:#4a4a4a;transform:scaleX(0.955);transform-origin:left top;">Regular Gypsum 1/2" x 4' x 12'</div>
<div class="a" style="left:748px;top:464px;width:76px;height:23px;background:#fff;border:1px solid #dcdcdc;border-bottom:0;"></div>
<div class="t" style="left:756px;top:469.5px;font-size:11.4px;color:#2b2b3b;transform:scaleX(0.965);transform-origin:left top;">Equivalence</div>
<div class="a" style="left:743px;top:486px;width:1084px;height:498px;background:#fff;border:1px solid #dcdcdc;border-right:1px solid #6e6e6e;border-bottom:2px solid #6e6e6e;"></div>
<div class="a" style="left:824px;top:462px;width:118px;height:25px;background:#000;border-right:2px solid #8a8a8a;border-top:1px solid #555;"></div>
<div class="t" style="left:832px;top:467px;font-size:11.4px;color:#fff;letter-spacing:0.1px;">Equivalence<span style="margin-left:0px">options</span></div>
<div class="a" style="left:753px;top:501px;width:383px;height:441px;border:1px solid #a8a8a8;"></div><div class="a" style="left:761px;top:495px;width:105px;height:13px;background:#fff;"></div><div class="t" style="left:763px;top:496.5px;font-size:11.4px;color:#2b2b3b;transform:scaleX(1.01);transform-origin:left top;">Equivalent items list</div>
<div class="a" style="left:761px;top:512px;width:307px;height:34px;background:#fff;border:1px solid #e4e4e4;border-top:2px solid #6e6e6e;border-left:2px solid #6e6e6e;"></div>
<svg style="left:769px;top:518.7px;color:#0f1f2d;" width="20" height="20"><use href="#filter"/></svg>
<svg style="left:801px;top:525.6px;color:#0f1f2d;" width="20" height="8"><use href="#lines"/></svg>
<svg style="left:835px;top:522.4px;color:#0f1f2d;" width="16" height="13"><use href="#chart"/></svg>
<svg style="left:865px;top:520.3px;color:#0f1f2d;" width="20" height="18"><use href="#printsm"/></svg>
<div class="a" style="left:761px;top:547px;width:308px;height:388px;background:#ababab;border:1px solid #6a6a6a;"></div>
<div class="a" style="left:762px;top:548px;width:306px;height:20px;background:#232a36;"></div>
<div class="a" style="left:781px;top:549px;width:1px;height:19px;background:#fff;"></div>
<div class="t" style="left:792px;top:552px;font-size:12px;color:#fff;font-weight:bold;letter-spacing:0.3px;width:300px;text-align:center;">Name</div>
<div class="a" style="left:762px;top:568px;width:306px;height:20px;background:#dff4f1;border-bottom:1px solid #ececec;"></div>
<div class="a" style="left:762px;top:568px;width:20px;height:20px;background:#efefef;border-right:1px solid #9a9a9a;border-bottom:1px solid #9a9a9a;"></div>
<div class="t" style="left:785px;top:572px;font-size:11.5px;color:#111;word-spacing:-0.8px;">reg</div>
<div class="a" style="left:762px;top:588px;width:306px;height:20px;background:#fff;border-bottom:1px solid #ececec;"></div>
<div class="a" style="left:762px;top:588px;width:20px;height:20px;background:#efefef;border-right:1px solid #9a9a9a;border-bottom:1px solid #9a9a9a;"></div>
<div class="t" style="left:785px;top:592px;font-size:11.5px;color:#111;word-spacing:-0.8px;">Regular Gypsum 1/2" (ft2)</div>
<div class="a" style="left:762px;top:608px;width:306px;height:20px;background:#fff;border-bottom:1px solid #ececec;"></div>
<div class="a" style="left:762px;top:608px;width:20px;height:20px;background:#efefef;border-right:1px solid #9a9a9a;border-bottom:1px solid #9a9a9a;"></div>
<div class="t" style="left:785px;top:612px;font-size:11.5px;color:#111;word-spacing:-0.8px;">Regular Gypsum 3/8" x 4' x 8' CGC</div>
<div class="a" style="left:762px;top:628px;width:306px;height:20px;background:#fff;border-bottom:1px solid #ececec;"></div>
<div class="a" style="left:762px;top:628px;width:20px;height:20px;background:#efefef;border-right:1px solid #9a9a9a;border-bottom:1px solid #9a9a9a;"></div>
<div class="t" style="left:785px;top:632px;font-size:11.5px;color:#111;word-spacing:-0.8px;">Regular Gypsum 1/2" x 4' x 8' Ultra LIght CGC</div>
<div class="a" style="left:762px;top:648px;width:306px;height:20px;background:#fff;border-bottom:1px solid #ececec;"></div>
<div class="a" style="left:762px;top:648px;width:20px;height:20px;background:#efefef;border-right:1px solid #9a9a9a;border-bottom:1px solid #9a9a9a;"></div>
<div class="t" style="left:785px;top:652px;font-size:11.5px;color:#111;word-spacing:-0.8px;">Regular Gypsum 1/2" x 4' x 12' Ultra Light CGC</div>
<div class="a" style="left:762px;top:668px;width:306px;height:20px;background:#fff;border-bottom:1px solid #ececec;"></div>
<div class="a" style="left:762px;top:668px;width:20px;height:20px;background:#efefef;border-right:1px solid #9a9a9a;border-bottom:1px solid #9a9a9a;"></div>
<div class="t" style="left:785px;top:672px;font-size:11.5px;color:#111;word-spacing:-0.8px;">Regular Gypsum UL 1/2" x 54" x 12' CGC</div>
<div class="a" style="left:762px;top:688px;width:306px;height:20px;background:#fff;border-bottom:1px solid #ececec;"></div>
<div class="a" style="left:762px;top:688px;width:20px;height:20px;background:#efefef;border-right:1px solid #9a9a9a;border-bottom:1px solid #9a9a9a;"></div>
<div class="t" style="left:785px;top:692px;font-size:11.5px;color:#111;word-spacing:-0.8px;">Regular Gypsum 1/4" x 4' x 8' Flexible CGC</div>
<div class="a" style="left:762px;top:708px;width:306px;height:20px;background:#fff;border-bottom:1px solid #ececec;"></div>
<div class="a" style="left:762px;top:708px;width:20px;height:20px;background:#efefef;border-right:1px solid #9a9a9a;border-bottom:1px solid #9a9a9a;"></div>
<div class="t" style="left:785px;top:712px;font-size:11.5px;color:#111;word-spacing:-0.8px;">Regular Gypsum 1/2" x 4' x 9' Ultra Light CGC</div>
<div class="a" style="left:762px;top:728px;width:306px;height:20px;background:#fff;border-bottom:1px solid #ececec;"></div>
<div class="a" style="left:762px;top:728px;width:20px;height:20px;background:#efefef;border-right:1px solid #9a9a9a;border-bottom:1px solid #9a9a9a;"></div>
<div class="t" style="left:785px;top:732px;font-size:11.5px;color:#111;word-spacing:-0.8px;">Regular Gypsum 1/2" x 4' x 10' Ultra Light CGC</div>
<div class="a" style="left:762px;top:748px;width:306px;height:20px;background:#fff;border-bottom:1px solid #ececec;"></div>
<div class="a" style="left:762px;top:748px;width:20px;height:20px;background:#efefef;border-right:1px solid #9a9a9a;border-bottom:1px solid #9a9a9a;"></div>
<div class="t" style="left:785px;top:752px;font-size:11.5px;color:#111;word-spacing:-0.8px;">Regular Gypsum 1/2" x 54" x 12' Ultra Light CGC</div>
<div class="a" style="left:762px;top:768px;width:306px;height:20px;background:#fff;border-bottom:1px solid #ececec;"></div>
<div class="a" style="left:762px;top:768px;width:20px;height:20px;background:#efefef;border-right:1px solid #9a9a9a;border-bottom:1px solid #9a9a9a;"></div>
<div class="t" style="left:785px;top:772px;font-size:11.5px;color:#111;word-spacing:-0.8px;">Regular Gypsum 3/8" x 4' x 8'</div>
<div class="a" style="left:762px;top:788px;width:306px;height:20px;background:#fff;border-bottom:1px solid #ececec;"></div>
<div class="a" style="left:762px;top:788px;width:20px;height:20px;background:#efefef;border-right:1px solid #9a9a9a;border-bottom:1px solid #9a9a9a;"></div>
<div class="t" style="left:785px;top:792px;font-size:11.5px;color:#111;word-spacing:-0.8px;">Regular Gypsum 1/2" x 4' x 10'</div>
<div class="a" style="left:762px;top:808px;width:306px;height:20px;background:#fff;border-bottom:1px solid #ececec;"></div>
<div class="a" style="left:762px;top:808px;width:20px;height:20px;background:#efefef;border-right:1px solid #9a9a9a;border-bottom:1px solid #9a9a9a;"></div>
<div class="t" style="left:785px;top:812px;font-size:11.5px;color:#111;word-spacing:-0.8px;">Regular Gypsum 1/2" x 4' x 12'</div>
<div class="a" style="left:762px;top:828px;width:306px;height:20px;background:#fff;border-bottom:1px solid #ececec;"></div>
<div class="a" style="left:762px;top:828px;width:20px;height:20px;background:#efefef;border-right:1px solid #9a9a9a;border-bottom:1px solid #9a9a9a;"></div>
<div class="t" style="left:785px;top:832px;font-size:11.5px;color:#111;word-spacing:-0.8px;">Regular Gypsum 1/2" x 4' x 12'</div>
<div class="a" style="left:762px;top:848px;width:306px;height:1px;background:#6a6a6a;"></div>
<div class="a" style="left:762px;top:917px;width:306px;height:17px;background:#f0f0f0;"></div>
<div class="a" style="left:855px;top:918px;width:176px;height:15px;background:#cdcdcd;"></div>
<svg style="left:766px;top:921px" width="7" height="9"><path d="M5.500 .8L1.500 4.500L5.500 8.200" fill="none" stroke="#444" stroke-width="1.700"/></svg>
<svg style="left:1056px;top:921px" width="7" height="9"><path d="M1.500 .8L5.500 4.500L1.500 8.200" fill="none" stroke="#444" stroke-width="1.700"/></svg>
<div class="a" style="left:1077px;top:643px;width:47px;height:89px;background:#fff;border:1px solid #a8a8a8;"></div>
<div class="a" style="left:1077px;top:747px;width:47px;height:89px;background:#fff;border:1px solid #a8a8a8;"></div>
<svg style="left:1093px;top:663px;color:#0f1f2d;" width="16" height="14"><use href="#ar"/></svg>
<svg style="left:1091px;top:700.5px;color:#0f1f2d;" width="20" height="18"><use href="#arbar"/></svg>
<svg style="left:1093px;top:766.5px;color:#0f1f2d;" width="16" height="14"><use href="#al"/></svg>
<svg style="left:1091px;top:804.5px;color:#0f1f2d;" width="20" height="18"><use href="#albar"/></svg>
<div class="a" style="left:761px;top:951px;width:97px;height:23px;background:#fff;border-right:1px solid #111;border-bottom:2px solid #111;box-shadow:1px 0 0 rgba(0,0,0,.35);"></div><div class="t" style="left:761px;top:957.0px;font-size:11.4px;color:#2b2b3b;width:95px;text-align:center;transform:scaleX(0.94);transform-origin:center top;">Select</div>
<div class="a" style="left:1145px;top:487px;width:3.5px;height:496px;background:#8aa7cf;"></div>
<div class="a" style="left:1153px;top:501px;width:653px;height:441px;border:1px solid #a8a8a8;"></div><div class="a" style="left:1160px;top:495px;width:70px;height:13px;background:#fff;"></div><div class="t" style="left:1162px;top:496.5px;font-size:11.4px;color:#2b2b3b;transform:scaleX(0.945);transform-origin:left top;">Options group</div>
<div class="t" style="left:1163px;top:521px;font-size:11.4px;color:#0000e0;transform:scaleX(0.975);transform-origin:left top;text-decoration:underline;">Group Name</div>
<div class="a" style="left:1289px;top:511px;width:200px;height:19px;background:#e9ebee;border:1px solid #a4adba;"></div>
<div class="a" style="left:1472px;top:512px;width:16px;height:17px;background:#fdfdfd;"></div>
<svg style="left:1477px;top:519px;color:#8a8a8a;" width="6" height="3.5"><use href="#tri"/></svg>
<div class="t" style="left:1291.5px;top:514.5px;font-size:11.4px;color:#111;transform:scaleX(0.905);transform-origin:left top;">Regular Gypsum</div>
<div class="t" style="left:1163px;top:544.5px;font-size:11.4px;color:#2b2b3b;transform:scaleX(0.97);transform-origin:left top;">Custom name</div>
<div class="a" style="left:1289px;top:535px;width:200px;height:19px;background:#efefef;border:1px solid #a6a6a6;"></div>
<div class="t" style="left:1290.5px;top:538.5px;font-size:11.4px;color:#111;transform:scaleX(0.905);transform-origin:left top;">Regular Gypsum</div>
<div class="a" style="left:1289px;top:560px;width:12px;height:12px;background:#fff;border:1px solid #d0d0d0;border-top:1px solid #6a6a6a;border-left:1px solid #6a6a6a;"></div>
<svg style="left:1291px;top:562px" width="9" height="9"><path d="M1 4L3.300 6.500L7.800 1" fill="none" stroke="#000" stroke-width="1.800"/></svg>
<div class="t" style="left:1307px;top:561.5px;font-size:11.4px;color:#2b2b3b;transform:scaleX(0.985);transform-origin:left top;">Selected options group</div>
<div class="a" style="left:1161px;top:584px;width:637px;height:34px;background:#fff;border:1px solid #e4e4e4;border-top:2px solid #6e6e6e;border-left:2px solid #6e6e6e;"></div>
<svg style="left:1173px;top:592px;color:#0f1f2d;" width="19.5" height="19.5"><use href="#plus"/></svg>
<svg style="left:1213px;top:591px;color:#0f1f2d;" width="20" height="20"><use href="#filter"/></svg>
<svg style="left:1245px;top:597.5px;color:#0f1f2d;" width="20" height="8"><use href="#lines"/></svg>
<svg style="left:1279px;top:594.5px;color:#0f1f2d;" width="16" height="13"><use href="#chart"/></svg>
<svg style="left:1309px;top:592.5px;color:#0f1f2d;" width="20" height="18"><use href="#printsm"/></svg>
<div class="a" style="left:1161px;top:619px;width:638px;height:318px;background:#ababab;border:1px solid #6a6a6a;"></div>
<div class="a" style="left:1162px;top:620px;width:470px;height:20px;background:#232a36;"></div>
<div class="a" style="left:1181px;top:621px;width:1px;height:19px;background:#fff;"></div>
<div class="t" style="left:1182px;top:624px;font-size:12px;color:#fff;font-weight:bold;width:47px;text-align:center;transform:scaleX(0.94);transform-origin:center top;">Code</div>
<div class="a" style="left:1229px;top:621px;width:1px;height:19px;background:#fff;"></div>
<div class="t" style="left:1230px;top:624px;font-size:12px;color:#fff;font-weight:bold;width:83px;text-align:center;transform:scaleX(0.96);transform-origin:center top;">Sorting Code</div>
<div class="a" style="left:1313px;top:621px;width:1px;height:19px;background:#fff;"></div>
<div class="t" style="left:1314px;top:624px;font-size:12px;color:#fff;font-weight:bold;width:254px;text-align:center;transform:scaleX(1.0);transform-origin:center top;">Name</div>
<div class="a" style="left:1568px;top:621px;width:1px;height:19px;background:#fff;"></div>
<div class="t" style="left:1569px;top:624px;font-size:12px;color:#fff;font-weight:bold;width:63px;text-align:center;transform:scaleX(1.0);transform-origin:center top;">Standard</div>
<div class="a" style="left:1162px;top:640px;width:470px;height:20px;background:#dff4f1;"></div>
<div class="a" style="left:1162px;top:640px;width:20px;height:20px;background:#efefef;border-right:1px solid #9a9a9a;border-bottom:1px solid #9a9a9a;"></div>
<div class="a" style="left:1593px;top:643px;width:13px;height:13px;background:#f3f3f3;border:1px solid #8e8f8f;box-shadow:inset 0 0 0 1px #fff;"></div>
<div class="a" style="left:1596px;top:646px;width:7px;height:7px;background:#2a8fc0;background:linear-gradient(135deg,#1a7fb0,#3fb0d8);"></div>
<div class="a" style="left:1162px;top:660px;width:470px;height:20px;background:#0078d7;"></div>
<div class="a" style="left:1162px;top:660px;width:20px;height:20px;background:#efefef;border-right:1px solid #9a9a9a;border-bottom:1px solid #9a9a9a;"></div>
<div class="a" style="left:1229px;top:660px;width:1px;height:20px;background:#dfe9f5;"></div>
<div class="a" style="left:1313px;top:660px;width:1px;height:20px;background:#dfe9f5;"></div>
<div class="a" style="left:1568px;top:660px;width:1px;height:20px;background:#dfe9f5;"></div>
<div class="t" style="left:1185px;top:664px;font-size:11.5px;color:#fff;transform:scaleX(0.966);transform-origin:left top;">101416</div>
<div class="t" style="left:1233px;top:664px;font-size:11.5px;color:#fff;transform:scaleX(0.966);transform-origin:left top;">09M</div>
<div class="t" style="left:1317px;top:664px;font-size:11.5px;color:#fff;word-spacing:-0.8px;">Regular Gypsum 1/2" (ft2)</div>
<div class="a" style="left:1593.0px;top:662.5px;width:13px;height:13px;background:#f3f3f3;border:1px solid #8e8f8f;box-shadow:inset 0 0 0 1px #fff;"></div><svg style="left:1595.0px;top:664.5px" width="9" height="9"><path d="M1.200 4.800L3.600 7.600L7.800 .8" fill="none" stroke="#3b50a6" stroke-width="1.700"/></svg>
<div class="a" style="left:1162px;top:680px;width:470px;height:20px;background:#fff;border-bottom:1px solid #ececec;"></div>
<div class="a" style="left:1162px;top:680px;width:20px;height:20px;background:#efefef;border-right:1px solid #9a9a9a;border-bottom:1px solid #9a9a9a;"></div>
<div class="a" style="left:1229px;top:680px;width:1px;height:20px;background:#e9e9e9;"></div>
<div class="a" style="left:1313px;top:680px;width:1px;height:20px;background:#e9e9e9;"></div>
<div class="a" style="left:1568px;top:680px;width:1px;height:20px;background:#e9e9e9;"></div>
<div class="t" style="left:1185px;top:684px;font-size:11.5px;color:#111;transform:scaleX(0.966);transform-origin:left top;">102167</div>
<div class="t" style="left:1233px;top:684px;font-size:11.5px;color:#111;transform:scaleX(0.966);transform-origin:left top;">09M</div>
<div class="t" style="left:1317px;top:684px;font-size:11.5px;color:#111;word-spacing:-0.8px;">Regular Gypsum 3/8" x 4' x 8' CGC</div>
<div class="a" style="left:1593.0px;top:682.5px;width:13px;height:13px;background:#f3f3f3;border:1px solid #8e8f8f;box-shadow:inset 0 0 0 1px #fff;"></div><svg style="left:1595.0px;top:684.5px" width="9" height="9"><path d="M1.200 4.800L3.600 7.600L7.800 .8" fill="none" stroke="#3b50a6" stroke-width="1.700"/></svg>
<div class="a" style="left:1162px;top:700px;width:470px;height:20px;background:#fff;border-bottom:1px solid #ececec;"></div>
<div class="a" style="left:1162px;top:700px;width:20px;height:20px;background:#efefef;border-right:1px solid #9a9a9a;border-bottom:1px solid #9a9a9a;"></div>
<div class="a" style="left:1229px;top:700px;width:1px;height:20px;background:#e9e9e9;"></div>
<div class="a" style="left:1313px;top:700px;width:1px;height:20px;background:#e9e9e9;"></div>
<div class="a" style="left:1568px;top:700px;width:1px;height:20px;background:#e9e9e9;"></div>
<div class="t" style="left:1185px;top:704px;font-size:11.5px;color:#111;transform:scaleX(0.966);transform-origin:left top;">102261</div>
<div class="t" style="left:1233px;top:704px;font-size:11.5px;color:#111;transform:scaleX(0.966);transform-origin:left top;">09M</div>
<div class="t" style="left:1317px;top:704px;font-size:11.5px;color:#111;word-spacing:-0.8px;">Regular Gypsum 1/2" x 4' x 8' Ultra LIght CGC</div>
<div class="a" style="left:1593.0px;top:702.5px;width:13px;height:13px;background:#f3f3f3;border:1px solid #8e8f8f;box-shadow:inset 0 0 0 1px #fff;"></div><svg style="left:1595.0px;top:704.5px" width="9" height="9"><path d="M1.200 4.800L3.600 7.600L7.800 .8" fill="none" stroke="#3b50a6" stroke-width="1.700"/></svg>
<div class="a" style="left:1162px;top:720px;width:470px;height:20px;background:#fff;border-bottom:1px solid #ececec;"></div>
<div class="a" style="left:1162px;top:720px;width:20px;height:20px;background:#efefef;border-right:1px solid #9a9a9a;border-bottom:1px solid #9a9a9a;"></div>
<div class="a" style="left:1229px;top:720px;width:1px;height:20px;background:#e9e9e9;"></div>
<div class="a" style="left:1313px;top:720px;width:1px;height:20px;background:#e9e9e9;"></div>
<div class="a" style="left:1568px;top:720px;width:1px;height:20px;background:#e9e9e9;"></div>
<div class="t" style="left:1185px;top:724px;font-size:11.5px;color:#111;transform:scaleX(0.966);transform-origin:left top;">103871</div>
<div class="t" style="left:1233px;top:724px;font-size:11.5px;color:#111;transform:scaleX(0.966);transform-origin:left top;">09M</div>
<div class="t" style="left:1317px;top:724px;font-size:11.5px;color:#111;word-spacing:-0.8px;">Regular Gypsum 1/2" x 4' x 12' Ultra Light CGC</div>
<div class="a" style="left:1593.0px;top:722.5px;width:13px;height:13px;background:#f3f3f3;border:1px solid #8e8f8f;box-shadow:inset 0 0 0 1px #fff;"></div><svg style="left:1595.0px;top:724.5px" width="9" height="9"><path d="M1.200 4.800L3.600 7.600L7.800 .8" fill="none" stroke="#3b50a6" stroke-width="1.700"/></svg>
<div class="a" style="left:1162px;top:740px;width:470px;height:20px;background:#fff;border-bottom:1px solid #ececec;"></div>
<div class="a" style="left:1162px;top:740px;width:20px;height:20px;background:#efefef;border-right:1px solid #9a9a9a;border-bottom:1px solid #9a9a9a;"></div>
<div class="a" style="left:1229px;top:740px;width:1px;height:20px;background:#e9e9e9;"></div>
<div class="a" style="left:1313px;top:740px;width:1px;height:20px;background:#e9e9e9;"></div>
<div class="a" style="left:1568px;top:740px;width:1px;height:20px;background:#e9e9e9;"></div>
<div class="t" style="left:1185px;top:744px;font-size:11.5px;color:#111;transform:scaleX(0.966);transform-origin:left top;">103872</div>
<div class="t" style="left:1233px;top:744px;font-size:11.5px;color:#111;transform:scaleX(0.966);transform-origin:left top;">09M</div>
<div class="t" style="left:1317px;top:744px;font-size:11.5px;color:#111;word-spacing:-0.8px;">Regular Gypsum UL 1/2" x 54" x 12' CGC</div>
<div class="a" style="left:1593.0px;top:742.5px;width:13px;height:13px;background:#f3f3f3;border:1px solid #8e8f8f;box-shadow:inset 0 0 0 1px #fff;"></div><svg style="left:1595.0px;top:744.5px" width="9" height="9"><path d="M1.200 4.800L3.600 7.600L7.800 .8" fill="none" stroke="#3b50a6" stroke-width="1.700"/></svg>
<div class="a" style="left:1162px;top:760px;width:470px;height:20px;background:#fff;border-bottom:1px solid #ececec;"></div>
<div class="a" style="left:1162px;top:760px;width:20px;height:20px;background:#efefef;border-right:1px solid #9a9a9a;border-bottom:1px solid #9a9a9a;"></div>
<div class="a" style="left:1229px;top:760px;width:1px;height:20px;background:#e9e9e9;"></div>
<div class="a" style="left:1313px;top:760px;width:1px;height:20px;background:#e9e9e9;"></div>
<div class="a" style="left:1568px;top:760px;width:1px;height:20px;background:#e9e9e9;"></div>
<div class="t" style="left:1185px;top:764px;font-size:11.5px;color:#111;transform:scaleX(0.966);transform-origin:left top;">103882</div>
<div class="t" style="left:1233px;top:764px;font-size:11.5px;color:#111;transform:scaleX(0.966);transform-origin:left top;">09M</div>
<div class="t" style="left:1317px;top:764px;font-size:11.5px;color:#111;word-spacing:-0.8px;">Regular Gypsum 1/4" x 4' x 8' Flexible CGC</div>
<div class="a" style="left:1593.0px;top:762.5px;width:13px;height:13px;background:#f3f3f3;border:1px solid #8e8f8f;box-shadow:inset 0 0 0 1px #fff;"></div><svg style="left:1595.0px;top:764.5px" width="9" height="9"><path d="M1.200 4.800L3.600 7.600L7.800 .8" fill="none" stroke="#3b50a6" stroke-width="1.700"/></svg>
<div class="a" style="left:1162px;top:780px;width:470px;height:20px;background:#fff;border-bottom:1px solid #ececec;"></div>
<div class="a" style="left:1162px;top:780px;width:20px;height:20px;background:#efefef;border-right:1px solid #9a9a9a;border-bottom:1px solid #9a9a9a;"></div>
<div class="a" style="left:1229px;top:780px;width:1px;height:20px;background:#e9e9e9;"></div>
<div class="a" style="left:1313px;top:780px;width:1px;height:20px;background:#e9e9e9;"></div>
<div class="a" style="left:1568px;top:780px;width:1px;height:20px;background:#e9e9e9;"></div>
<div class="t" style="left:1185px;top:784px;font-size:11.5px;color:#111;transform:scaleX(0.966);transform-origin:left top;">103910</div>
<div class="t" style="left:1233px;top:784px;font-size:11.5px;color:#111;transform:scaleX(0.966);transform-origin:left top;">09M</div>
<div class="t" style="left:1317px;top:784px;font-size:11.5px;color:#111;word-spacing:-0.8px;">Regular Gypsum 1/2" x 4' x 9' Ultra Light CGC</div>
<div class="a" style="left:1593.0px;top:782.5px;width:13px;height:13px;background:#f3f3f3;border:1px solid #8e8f8f;box-shadow:inset 0 0 0 1px #fff;"></div><svg style="left:1595.0px;top:784.5px" width="9" height="9"><path d="M1.200 4.800L3.600 7.600L7.800 .8" fill="none" stroke="#3b50a6" stroke-width="1.700"/></svg>
<div class="a" style="left:1162px;top:800px;width:470px;height:20px;background:#fff;border-bottom:1px solid #ececec;"></div>
<div class="a" style="left:1162px;top:800px;width:20px;height:20px;background:#efefef;border-right:1px solid #9a9a9a;border-bottom:1px solid #9a9a9a;"></div>
<div class="a" style="left:1229px;top:800px;width:1px;height:20px;background:#e9e9e9;"></div>
<div class="a" style="left:1313px;top:800px;width:1px;height:20px;background:#e9e9e9;"></div>
<div class="a" style="left:1568px;top:800px;width:1px;height:20px;background:#e9e9e9;"></div>
<div class="t" style="left:1185px;top:804px;font-size:11.5px;color:#111;transform:scaleX(0.966);transform-origin:left top;">103911</div>
<div class="t" style="left:1233px;top:804px;font-size:11.5px;color:#111;transform:scaleX(0.966);transform-origin:left top;">09M</div>
<div class="t" style="left:1317px;top:804px;font-size:11.5px;color:#111;word-spacing:-0.8px;">Regular Gypsum 1/2" x 4' x 10' Ultra Light CGC</div>
<div class="a" style="left:1593.0px;top:802.5px;width:13px;height:13px;background:#f3f3f3;border:1px solid #8e8f8f;box-shadow:inset 0 0 0 1px #fff;"></div><svg style="left:1595.0px;top:804.5px" width="9" height="9"><path d="M1.200 4.800L3.600 7.600L7.800 .8" fill="none" stroke="#3b50a6" stroke-width="1.700"/></svg>
<div class="a" style="left:1162px;top:820px;width:470px;height:20px;background:#fff;border-bottom:1px solid #ececec;"></div>
<div class="a" style="left:1162px;top:820px;width:20px;height:20px;background:#efefef;border-right:1px solid #9a9a9a;border-bottom:1px solid #9a9a9a;"></div>
<div class="a" style="left:1229px;top:820px;width:1px;height:20px;background:#e9e9e9;"></div>
<div class="a" style="left:1313px;top:820px;width:1px;height:20px;background:#e9e9e9;"></div>
<div class="a" style="left:1568px;top:820px;width:1px;height:20px;background:#e9e9e9;"></div>
<div class="t" style="left:1185px;top:824px;font-size:11.5px;color:#111;transform:scaleX(0.966);transform-origin:left top;">103912</div>
<div class="t" style="left:1233px;top:824px;font-size:11.5px;color:#111;transform:scaleX(0.966);transform-origin:left top;">09M</div>
<div class="t" style="left:1317px;top:824px;font-size:11.5px;color:#111;word-spacing:-0.8px;">Regular Gypsum 1/2" x 54" x 12' Ultra Light CGC</div>
<div class="a" style="left:1593.0px;top:822.5px;width:13px;height:13px;background:#f3f3f3;border:1px solid #8e8f8f;box-shadow:inset 0 0 0 1px #fff;"></div><svg style="left:1595.0px;top:824.5px" width="9" height="9"><path d="M1.200 4.800L3.600 7.600L7.800 .8" fill="none" stroke="#3b50a6" stroke-width="1.700"/></svg>
<div class="a" style="left:1162px;top:840px;width:470px;height:20px;background:#fff;border-bottom:1px solid #ececec;"></div>
<div class="a" style="left:1162px;top:840px;width:20px;height:20px;background:#efefef;border-right:1px solid #9a9a9a;border-bottom:1px solid #9a9a9a;"></div>
<div class="a" style="left:1229px;top:840px;width:1px;height:20px;background:#e9e9e9;"></div>
<div class="a" style="left:1313px;top:840px;width:1px;height:20px;background:#e9e9e9;"></div>
<div class="a" style="left:1568px;top:840px;width:1px;height:20px;background:#e9e9e9;"></div>
<div class="t" style="left:1185px;top:844px;font-size:11.5px;color:#111;transform:scaleX(0.966);transform-origin:left top;">106757</div>
<div class="t" style="left:1233px;top:844px;font-size:11.5px;color:#111;transform:scaleX(0.966);transform-origin:left top;">09M</div>
<div class="t" style="left:1317px;top:844px;font-size:11.5px;color:#111;word-spacing:-0.8px;">Regular Gypsum 3/8" x 4' x 8'</div>
<div class="a" style="left:1593.0px;top:842.5px;width:13px;height:13px;background:#f3f3f3;border:1px solid #8e8f8f;box-shadow:inset 0 0 0 1px #fff;"></div><svg style="left:1595.0px;top:844.5px" width="9" height="9"><path d="M1.200 4.800L3.600 7.600L7.800 .8" fill="none" stroke="#3b50a6" stroke-width="1.700"/></svg>
<div class="a" style="left:1162px;top:860px;width:470px;height:20px;background:#fff;border-bottom:1px solid #ececec;"></div>
<div class="a" style="left:1162px;top:860px;width:20px;height:20px;background:#efefef;border-right:1px solid #9a9a9a;border-bottom:1px solid #9a9a9a;"></div>
<div class="a" style="left:1229px;top:860px;width:1px;height:20px;background:#e9e9e9;"></div>
<div class="a" style="left:1313px;top:860px;width:1px;height:20px;background:#e9e9e9;"></div>
<div class="a" style="left:1568px;top:860px;width:1px;height:20px;background:#e9e9e9;"></div>
<div class="t" style="left:1185px;top:864px;font-size:11.5px;color:#111;transform:scaleX(0.966);transform-origin:left top;">106758</div>
<div class="t" style="left:1233px;top:864px;font-size:11.5px;color:#111;transform:scaleX(0.966);transform-origin:left top;">09M</div>
<div class="t" style="left:1317px;top:864px;font-size:11.5px;color:#111;word-spacing:-0.8px;">Regular Gypsum 1/2" x 4' x 10'</div>
<div class="a" style="left:1593.0px;top:862.5px;width:13px;height:13px;background:#f3f3f3;border:1px solid #8e8f8f;box-shadow:inset 0 0 0 1px #fff;"></div><svg style="left:1595.0px;top:864.5px" width="9" height="9"><path d="M1.200 4.800L3.600 7.600L7.800 .8" fill="none" stroke="#3b50a6" stroke-width="1.700"/></svg>
<div class="a" style="left:1162px;top:880px;width:470px;height:20px;background:#fff;border-bottom:1px solid #ececec;"></div>
<div class="a" style="left:1162px;top:880px;width:20px;height:20px;background:#efefef;border-right:1px solid #9a9a9a;border-bottom:1px solid #9a9a9a;"></div>
<div class="a" style="left:1229px;top:880px;width:1px;height:20px;background:#e9e9e9;"></div>
<div class="a" style="left:1313px;top:880px;width:1px;height:20px;background:#e9e9e9;"></div>
<div class="a" style="left:1568px;top:880px;width:1px;height:20px;background:#e9e9e9;"></div>
<div class="t" style="left:1185px;top:884px;font-size:11.5px;color:#111;transform:scaleX(0.966);transform-origin:left top;">106759</div>
<div class="t" style="left:1233px;top:884px;font-size:11.5px;color:#111;transform:scaleX(0.966);transform-origin:left top;">09M</div>
<div class="t" style="left:1317px;top:884px;font-size:11.5px;color:#111;word-spacing:-0.8px;">Regular Gypsum 1/2" x 4' x 12'</div>
<div class="a" style="left:1593.0px;top:882.5px;width:13px;height:13px;background:#f3f3f3;border:1px solid #8e8f8f;box-shadow:inset 0 0 0 1px #fff;"></div><svg style="left:1595.0px;top:884.5px" width="9" height="9"><path d="M1.200 4.800L3.600 7.600L7.800 .8" fill="none" stroke="#3b50a6" stroke-width="1.700"/></svg>
<div class="a" style="left:1162px;top:900px;width:470px;height:20px;background:#fff;border-bottom:1px solid #ececec;"></div>
<div class="a" style="left:1162px;top:900px;width:20px;height:20px;background:#efefef;border-right:1px solid #9a9a9a;border-bottom:1px solid #9a9a9a;"></div>
<div class="a" style="left:1229px;top:900px;width:1px;height:20px;background:#e9e9e9;"></div>
<div class="a" style="left:1313px;top:900px;width:1px;height:20px;background:#e9e9e9;"></div>
<div class="a" style="left:1568px;top:900px;width:1px;height:20px;background:#e9e9e9;"></div>
<div class="t" style="left:1185px;top:904px;font-size:11.5px;color:#111;transform:scaleX(0.966);transform-origin:left top;">107840</div>
<div class="t" style="left:1233px;top:904px;font-size:11.5px;color:#111;transform:scaleX(0.966);transform-origin:left top;">09M</div>
<div class="t" style="left:1317px;top:904px;font-size:11.5px;color:#111;word-spacing:-0.8px;">Regular Gypsum 1/2" x 4' x 12'</div>
<div class="a" style="left:1593.0px;top:902.5px;width:13px;height:13px;background:#f3f3f3;border:1px solid #8e8f8f;box-shadow:inset 0 0 0 1px #fff;"></div><svg style="left:1595.0px;top:904.5px" width="9" height="9"><path d="M1.200 4.800L3.600 7.600L7.800 .8" fill="none" stroke="#3b50a6" stroke-width="1.700"/></svg>
<div class="a" style="left:1161px;top:951px;width:97px;height:23px;background:#fff;border-right:1px solid #111;border-bottom:2px solid #111;box-shadow:1px 0 0 rgba(0,0,0,.35);"></div><div class="t" style="left:1161px;top:957.0px;font-size:11.4px;color:#2b2b3b;width:95px;text-align:center;transform:scaleX(0.94);transform-origin:center top;">Select</div>
<div class="a" style="left:1740px;top:1001px;width:74px;height:25px;background:#fff;border-right:1px solid #111;border-bottom:2px solid #111;box-shadow:1px 0 0 rgba(0,0,0,.35);"></div><div class="t" style="left:1740px;top:1008.0px;font-size:11.4px;color:#2b2b3b;width:72px;text-align:center;transform:scaleX(0.94);transform-origin:center top;">End</div>
<svg style="left:1826px;top:1024px" width="9" height="9"><path d="M6 0h2v2H6zM6 3h2v2H6zM3 3h2v2H3zM6 6h2v2H6zM3 6h2v2H3zM0 6h2v2H0z" fill="#8a8a8a"/></svg>
<!-- part6 -->
<svg style="left:713.8px;top:364.0px;filter:drop-shadow(2px 3px 2px rgba(0,0,0,.45))" width="261.0" height="69.2"><ellipse cx="130.5" cy="34.6" rx="121.0" ry="25.1" fill="none" stroke="#8c1111" stroke-width="3"/></svg>
<svg style="left:1248px;top:486.20000000000005px;filter:drop-shadow(2px 3px 2px rgba(0,0,0,.45))" width="278" height="56.8"><ellipse cx="139" cy="28.4" rx="129.5" ry="18.9" fill="none" stroke="#8c1111" stroke-width="3"/></svg>
<svg style="left:1253px;top:544px;filter:drop-shadow(2px 3px 2px rgba(0,0,0,.45))" width="194" height="50"><ellipse cx="97" cy="25" rx="87.5" ry="15.5" fill="none" stroke="#8c1111" stroke-width="3"/></svg>
<svg style="left:1155.3px;top:575px;filter:drop-shadow(2px 3px 2px rgba(0,0,0,.45))" width="56" height="52"><ellipse cx="28" cy="26" rx="18.5" ry="16.5" fill="none" stroke="#8c1111" stroke-width="3"/></svg>
<svg style="left:1071px;top:642px;filter:drop-shadow(2px 3px 2px rgba(0,0,0,.45))" width="64" height="54"><ellipse cx="32" cy="27" rx="22.5" ry="17.5" fill="none" stroke="#8c1111" stroke-width="3"/></svg>
<svg style="left:1717.5px;top:981.7px;filter:drop-shadow(2px 3px 2px rgba(0,0,0,.45))" width="116" height="58.6"><ellipse cx="58" cy="29.3" rx="48.5" ry="19.8" fill="none" stroke="#8c1111" stroke-width="3"/></svg>
<div class="a" style="left:1236.6px;top:484.0px;width:28.4px;height:28.4px;background:#8b0a0a;border-radius:50%;"></div><div class="t" style="left:1236.8px;top:488.7px;font-size:18.5px;color:#fff;width:28px;text-align:center;">1</div>
<div class="a" style="left:1147.1px;top:562.1999999999999px;width:28.4px;height:28.4px;background:#8b0a0a;border-radius:50%;"></div><div class="t" style="left:1147.3px;top:566.9px;font-size:18.5px;color:#fff;width:28px;text-align:center;">2</div>
<div class="a" style="left:1070.2px;top:624.3px;width:28.4px;height:28.4px;background:#8b0a0a;border-radius:50%;"></div><div class="t" style="left:1070.4px;top:629.0px;font-size:18.5px;color:#fff;width:28px;text-align:center;">3</div>
<div class="a" style="left:1233.8px;top:552.6999999999999px;width:28.4px;height:28.4px;background:#8b0a0a;border-radius:50%;"></div><div class="t" style="left:1234px;top:557.4px;font-size:18.5px;color:#fff;width:28px;text-align:center;">4</div>
<div class="a" style="left:1695.1px;top:998.4px;width:28.4px;height:28.4px;background:#8b0a0a;border-radius:50%;"></div><div class="t" style="left:1695.3px;top:1003.1px;font-size:18.5px;color:#fff;width:28px;text-align:center;">5</div>
</div></div>
</body></html>
